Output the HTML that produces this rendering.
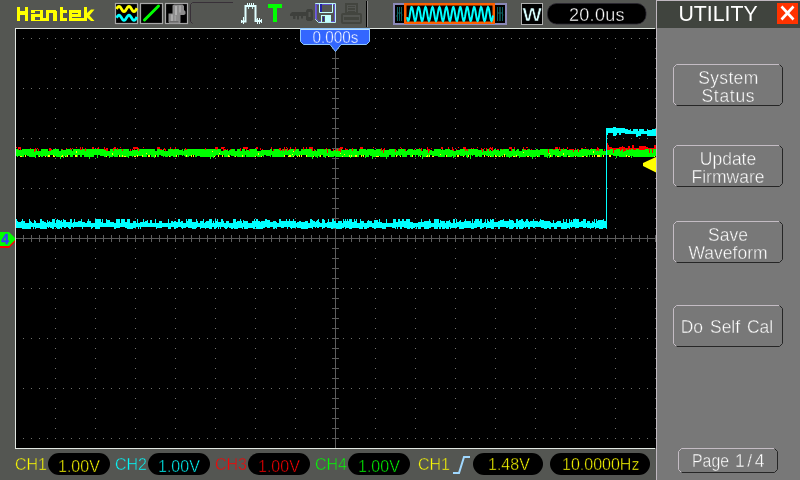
<!DOCTYPE html>
<html><head><meta charset="utf-8"><title>Hantek Utility</title>
<style>html,body{margin:0;padding:0;width:800px;height:480px;overflow:hidden;background:#545652}</style>
</head><body>
<svg width="800" height="480" viewBox="0 0 800 480" style="position:absolute;left:0;top:0;will-change:transform">
<rect x="0" y="0" width="800" height="480" fill="#545652"/>
<!-- plot -->
<rect x="15" y="28" width="640" height="421" fill="#e0e6e0"/>
<rect x="16" y="29" width="640" height="419" fill="#000"/>
<g shape-rendering="crispEdges">
<path d="M23 38h1v1h-1zM31 38h1v1h-1zM39 38h1v1h-1zM47 38h1v1h-1zM55 38h1v1h-1zM63 38h1v1h-1zM71 38h1v1h-1zM79 38h1v1h-1zM87 38h1v1h-1zM95 38h1v1h-1zM103 38h1v1h-1zM111 38h1v1h-1zM119 38h1v1h-1zM127 38h1v1h-1zM135 38h1v1h-1zM143 38h1v1h-1zM151 38h1v1h-1zM159 38h1v1h-1zM167 38h1v1h-1zM175 38h1v1h-1zM183 38h1v1h-1zM191 38h1v1h-1zM199 38h1v1h-1zM207 38h1v1h-1zM215 38h1v1h-1zM223 38h1v1h-1zM231 38h1v1h-1zM239 38h1v1h-1zM247 38h1v1h-1zM255 38h1v1h-1zM263 38h1v1h-1zM271 38h1v1h-1zM279 38h1v1h-1zM287 38h1v1h-1zM295 38h1v1h-1zM303 38h1v1h-1zM311 38h1v1h-1zM319 38h1v1h-1zM327 38h1v1h-1zM335 38h1v1h-1zM343 38h1v1h-1zM351 38h1v1h-1zM359 38h1v1h-1zM367 38h1v1h-1zM375 38h1v1h-1zM383 38h1v1h-1zM391 38h1v1h-1zM399 38h1v1h-1zM407 38h1v1h-1zM415 38h1v1h-1zM423 38h1v1h-1zM431 38h1v1h-1zM439 38h1v1h-1zM447 38h1v1h-1zM455 38h1v1h-1zM463 38h1v1h-1zM471 38h1v1h-1zM479 38h1v1h-1zM487 38h1v1h-1zM495 38h1v1h-1zM503 38h1v1h-1zM511 38h1v1h-1zM519 38h1v1h-1zM527 38h1v1h-1zM535 38h1v1h-1zM543 38h1v1h-1zM551 38h1v1h-1zM559 38h1v1h-1zM567 38h1v1h-1zM575 38h1v1h-1zM583 38h1v1h-1zM591 38h1v1h-1zM599 38h1v1h-1zM607 38h1v1h-1zM615 38h1v1h-1zM623 38h1v1h-1zM631 38h1v1h-1zM639 38h1v1h-1zM647 38h1v1h-1zM655 38h1v1h-1zM23 88h1v1h-1zM31 88h1v1h-1zM39 88h1v1h-1zM47 88h1v1h-1zM55 88h1v1h-1zM63 88h1v1h-1zM71 88h1v1h-1zM79 88h1v1h-1zM87 88h1v1h-1zM95 88h1v1h-1zM103 88h1v1h-1zM111 88h1v1h-1zM119 88h1v1h-1zM127 88h1v1h-1zM135 88h1v1h-1zM143 88h1v1h-1zM151 88h1v1h-1zM159 88h1v1h-1zM167 88h1v1h-1zM175 88h1v1h-1zM183 88h1v1h-1zM191 88h1v1h-1zM199 88h1v1h-1zM207 88h1v1h-1zM215 88h1v1h-1zM223 88h1v1h-1zM231 88h1v1h-1zM239 88h1v1h-1zM247 88h1v1h-1zM255 88h1v1h-1zM263 88h1v1h-1zM271 88h1v1h-1zM279 88h1v1h-1zM287 88h1v1h-1zM295 88h1v1h-1zM303 88h1v1h-1zM311 88h1v1h-1zM319 88h1v1h-1zM327 88h1v1h-1zM335 88h1v1h-1zM343 88h1v1h-1zM351 88h1v1h-1zM359 88h1v1h-1zM367 88h1v1h-1zM375 88h1v1h-1zM383 88h1v1h-1zM391 88h1v1h-1zM399 88h1v1h-1zM407 88h1v1h-1zM415 88h1v1h-1zM423 88h1v1h-1zM431 88h1v1h-1zM439 88h1v1h-1zM447 88h1v1h-1zM455 88h1v1h-1zM463 88h1v1h-1zM471 88h1v1h-1zM479 88h1v1h-1zM487 88h1v1h-1zM495 88h1v1h-1zM503 88h1v1h-1zM511 88h1v1h-1zM519 88h1v1h-1zM527 88h1v1h-1zM535 88h1v1h-1zM543 88h1v1h-1zM551 88h1v1h-1zM559 88h1v1h-1zM567 88h1v1h-1zM575 88h1v1h-1zM583 88h1v1h-1zM591 88h1v1h-1zM599 88h1v1h-1zM607 88h1v1h-1zM615 88h1v1h-1zM623 88h1v1h-1zM631 88h1v1h-1zM639 88h1v1h-1zM647 88h1v1h-1zM655 88h1v1h-1zM23 138h1v1h-1zM31 138h1v1h-1zM39 138h1v1h-1zM47 138h1v1h-1zM55 138h1v1h-1zM63 138h1v1h-1zM71 138h1v1h-1zM79 138h1v1h-1zM87 138h1v1h-1zM95 138h1v1h-1zM103 138h1v1h-1zM111 138h1v1h-1zM119 138h1v1h-1zM127 138h1v1h-1zM135 138h1v1h-1zM143 138h1v1h-1zM151 138h1v1h-1zM159 138h1v1h-1zM167 138h1v1h-1zM175 138h1v1h-1zM183 138h1v1h-1zM191 138h1v1h-1zM199 138h1v1h-1zM207 138h1v1h-1zM215 138h1v1h-1zM223 138h1v1h-1zM231 138h1v1h-1zM239 138h1v1h-1zM247 138h1v1h-1zM255 138h1v1h-1zM263 138h1v1h-1zM271 138h1v1h-1zM279 138h1v1h-1zM287 138h1v1h-1zM295 138h1v1h-1zM303 138h1v1h-1zM311 138h1v1h-1zM319 138h1v1h-1zM327 138h1v1h-1zM335 138h1v1h-1zM343 138h1v1h-1zM351 138h1v1h-1zM359 138h1v1h-1zM367 138h1v1h-1zM375 138h1v1h-1zM383 138h1v1h-1zM391 138h1v1h-1zM399 138h1v1h-1zM407 138h1v1h-1zM415 138h1v1h-1zM423 138h1v1h-1zM431 138h1v1h-1zM439 138h1v1h-1zM447 138h1v1h-1zM455 138h1v1h-1zM463 138h1v1h-1zM471 138h1v1h-1zM479 138h1v1h-1zM487 138h1v1h-1zM495 138h1v1h-1zM503 138h1v1h-1zM511 138h1v1h-1zM519 138h1v1h-1zM527 138h1v1h-1zM535 138h1v1h-1zM543 138h1v1h-1zM551 138h1v1h-1zM559 138h1v1h-1zM567 138h1v1h-1zM575 138h1v1h-1zM583 138h1v1h-1zM591 138h1v1h-1zM599 138h1v1h-1zM607 138h1v1h-1zM615 138h1v1h-1zM623 138h1v1h-1zM631 138h1v1h-1zM639 138h1v1h-1zM647 138h1v1h-1zM655 138h1v1h-1zM23 188h1v1h-1zM31 188h1v1h-1zM39 188h1v1h-1zM47 188h1v1h-1zM55 188h1v1h-1zM63 188h1v1h-1zM71 188h1v1h-1zM79 188h1v1h-1zM87 188h1v1h-1zM95 188h1v1h-1zM103 188h1v1h-1zM111 188h1v1h-1zM119 188h1v1h-1zM127 188h1v1h-1zM135 188h1v1h-1zM143 188h1v1h-1zM151 188h1v1h-1zM159 188h1v1h-1zM167 188h1v1h-1zM175 188h1v1h-1zM183 188h1v1h-1zM191 188h1v1h-1zM199 188h1v1h-1zM207 188h1v1h-1zM215 188h1v1h-1zM223 188h1v1h-1zM231 188h1v1h-1zM239 188h1v1h-1zM247 188h1v1h-1zM255 188h1v1h-1zM263 188h1v1h-1zM271 188h1v1h-1zM279 188h1v1h-1zM287 188h1v1h-1zM295 188h1v1h-1zM303 188h1v1h-1zM311 188h1v1h-1zM319 188h1v1h-1zM327 188h1v1h-1zM335 188h1v1h-1zM343 188h1v1h-1zM351 188h1v1h-1zM359 188h1v1h-1zM367 188h1v1h-1zM375 188h1v1h-1zM383 188h1v1h-1zM391 188h1v1h-1zM399 188h1v1h-1zM407 188h1v1h-1zM415 188h1v1h-1zM423 188h1v1h-1zM431 188h1v1h-1zM439 188h1v1h-1zM447 188h1v1h-1zM455 188h1v1h-1zM463 188h1v1h-1zM471 188h1v1h-1zM479 188h1v1h-1zM487 188h1v1h-1zM495 188h1v1h-1zM503 188h1v1h-1zM511 188h1v1h-1zM519 188h1v1h-1zM527 188h1v1h-1zM535 188h1v1h-1zM543 188h1v1h-1zM551 188h1v1h-1zM559 188h1v1h-1zM567 188h1v1h-1zM575 188h1v1h-1zM583 188h1v1h-1zM591 188h1v1h-1zM599 188h1v1h-1zM607 188h1v1h-1zM615 188h1v1h-1zM623 188h1v1h-1zM631 188h1v1h-1zM639 188h1v1h-1zM647 188h1v1h-1zM655 188h1v1h-1zM23 288h1v1h-1zM31 288h1v1h-1zM39 288h1v1h-1zM47 288h1v1h-1zM55 288h1v1h-1zM63 288h1v1h-1zM71 288h1v1h-1zM79 288h1v1h-1zM87 288h1v1h-1zM95 288h1v1h-1zM103 288h1v1h-1zM111 288h1v1h-1zM119 288h1v1h-1zM127 288h1v1h-1zM135 288h1v1h-1zM143 288h1v1h-1zM151 288h1v1h-1zM159 288h1v1h-1zM167 288h1v1h-1zM175 288h1v1h-1zM183 288h1v1h-1zM191 288h1v1h-1zM199 288h1v1h-1zM207 288h1v1h-1zM215 288h1v1h-1zM223 288h1v1h-1zM231 288h1v1h-1zM239 288h1v1h-1zM247 288h1v1h-1zM255 288h1v1h-1zM263 288h1v1h-1zM271 288h1v1h-1zM279 288h1v1h-1zM287 288h1v1h-1zM295 288h1v1h-1zM303 288h1v1h-1zM311 288h1v1h-1zM319 288h1v1h-1zM327 288h1v1h-1zM335 288h1v1h-1zM343 288h1v1h-1zM351 288h1v1h-1zM359 288h1v1h-1zM367 288h1v1h-1zM375 288h1v1h-1zM383 288h1v1h-1zM391 288h1v1h-1zM399 288h1v1h-1zM407 288h1v1h-1zM415 288h1v1h-1zM423 288h1v1h-1zM431 288h1v1h-1zM439 288h1v1h-1zM447 288h1v1h-1zM455 288h1v1h-1zM463 288h1v1h-1zM471 288h1v1h-1zM479 288h1v1h-1zM487 288h1v1h-1zM495 288h1v1h-1zM503 288h1v1h-1zM511 288h1v1h-1zM519 288h1v1h-1zM527 288h1v1h-1zM535 288h1v1h-1zM543 288h1v1h-1zM551 288h1v1h-1zM559 288h1v1h-1zM567 288h1v1h-1zM575 288h1v1h-1zM583 288h1v1h-1zM591 288h1v1h-1zM599 288h1v1h-1zM607 288h1v1h-1zM615 288h1v1h-1zM623 288h1v1h-1zM631 288h1v1h-1zM639 288h1v1h-1zM647 288h1v1h-1zM655 288h1v1h-1zM23 338h1v1h-1zM31 338h1v1h-1zM39 338h1v1h-1zM47 338h1v1h-1zM55 338h1v1h-1zM63 338h1v1h-1zM71 338h1v1h-1zM79 338h1v1h-1zM87 338h1v1h-1zM95 338h1v1h-1zM103 338h1v1h-1zM111 338h1v1h-1zM119 338h1v1h-1zM127 338h1v1h-1zM135 338h1v1h-1zM143 338h1v1h-1zM151 338h1v1h-1zM159 338h1v1h-1zM167 338h1v1h-1zM175 338h1v1h-1zM183 338h1v1h-1zM191 338h1v1h-1zM199 338h1v1h-1zM207 338h1v1h-1zM215 338h1v1h-1zM223 338h1v1h-1zM231 338h1v1h-1zM239 338h1v1h-1zM247 338h1v1h-1zM255 338h1v1h-1zM263 338h1v1h-1zM271 338h1v1h-1zM279 338h1v1h-1zM287 338h1v1h-1zM295 338h1v1h-1zM303 338h1v1h-1zM311 338h1v1h-1zM319 338h1v1h-1zM327 338h1v1h-1zM335 338h1v1h-1zM343 338h1v1h-1zM351 338h1v1h-1zM359 338h1v1h-1zM367 338h1v1h-1zM375 338h1v1h-1zM383 338h1v1h-1zM391 338h1v1h-1zM399 338h1v1h-1zM407 338h1v1h-1zM415 338h1v1h-1zM423 338h1v1h-1zM431 338h1v1h-1zM439 338h1v1h-1zM447 338h1v1h-1zM455 338h1v1h-1zM463 338h1v1h-1zM471 338h1v1h-1zM479 338h1v1h-1zM487 338h1v1h-1zM495 338h1v1h-1zM503 338h1v1h-1zM511 338h1v1h-1zM519 338h1v1h-1zM527 338h1v1h-1zM535 338h1v1h-1zM543 338h1v1h-1zM551 338h1v1h-1zM559 338h1v1h-1zM567 338h1v1h-1zM575 338h1v1h-1zM583 338h1v1h-1zM591 338h1v1h-1zM599 338h1v1h-1zM607 338h1v1h-1zM615 338h1v1h-1zM623 338h1v1h-1zM631 338h1v1h-1zM639 338h1v1h-1zM647 338h1v1h-1zM655 338h1v1h-1zM23 388h1v1h-1zM31 388h1v1h-1zM39 388h1v1h-1zM47 388h1v1h-1zM55 388h1v1h-1zM63 388h1v1h-1zM71 388h1v1h-1zM79 388h1v1h-1zM87 388h1v1h-1zM95 388h1v1h-1zM103 388h1v1h-1zM111 388h1v1h-1zM119 388h1v1h-1zM127 388h1v1h-1zM135 388h1v1h-1zM143 388h1v1h-1zM151 388h1v1h-1zM159 388h1v1h-1zM167 388h1v1h-1zM175 388h1v1h-1zM183 388h1v1h-1zM191 388h1v1h-1zM199 388h1v1h-1zM207 388h1v1h-1zM215 388h1v1h-1zM223 388h1v1h-1zM231 388h1v1h-1zM239 388h1v1h-1zM247 388h1v1h-1zM255 388h1v1h-1zM263 388h1v1h-1zM271 388h1v1h-1zM279 388h1v1h-1zM287 388h1v1h-1zM295 388h1v1h-1zM303 388h1v1h-1zM311 388h1v1h-1zM319 388h1v1h-1zM327 388h1v1h-1zM335 388h1v1h-1zM343 388h1v1h-1zM351 388h1v1h-1zM359 388h1v1h-1zM367 388h1v1h-1zM375 388h1v1h-1zM383 388h1v1h-1zM391 388h1v1h-1zM399 388h1v1h-1zM407 388h1v1h-1zM415 388h1v1h-1zM423 388h1v1h-1zM431 388h1v1h-1zM439 388h1v1h-1zM447 388h1v1h-1zM455 388h1v1h-1zM463 388h1v1h-1zM471 388h1v1h-1zM479 388h1v1h-1zM487 388h1v1h-1zM495 388h1v1h-1zM503 388h1v1h-1zM511 388h1v1h-1zM519 388h1v1h-1zM527 388h1v1h-1zM535 388h1v1h-1zM543 388h1v1h-1zM551 388h1v1h-1zM559 388h1v1h-1zM567 388h1v1h-1zM575 388h1v1h-1zM583 388h1v1h-1zM591 388h1v1h-1zM599 388h1v1h-1zM607 388h1v1h-1zM615 388h1v1h-1zM623 388h1v1h-1zM631 388h1v1h-1zM639 388h1v1h-1zM647 388h1v1h-1zM655 388h1v1h-1zM23 438h1v1h-1zM31 438h1v1h-1zM39 438h1v1h-1zM47 438h1v1h-1zM55 438h1v1h-1zM63 438h1v1h-1zM71 438h1v1h-1zM79 438h1v1h-1zM87 438h1v1h-1zM95 438h1v1h-1zM103 438h1v1h-1zM111 438h1v1h-1zM119 438h1v1h-1zM127 438h1v1h-1zM135 438h1v1h-1zM143 438h1v1h-1zM151 438h1v1h-1zM159 438h1v1h-1zM167 438h1v1h-1zM175 438h1v1h-1zM183 438h1v1h-1zM191 438h1v1h-1zM199 438h1v1h-1zM207 438h1v1h-1zM215 438h1v1h-1zM223 438h1v1h-1zM231 438h1v1h-1zM239 438h1v1h-1zM247 438h1v1h-1zM255 438h1v1h-1zM263 438h1v1h-1zM271 438h1v1h-1zM279 438h1v1h-1zM287 438h1v1h-1zM295 438h1v1h-1zM303 438h1v1h-1zM311 438h1v1h-1zM319 438h1v1h-1zM327 438h1v1h-1zM335 438h1v1h-1zM343 438h1v1h-1zM351 438h1v1h-1zM359 438h1v1h-1zM367 438h1v1h-1zM375 438h1v1h-1zM383 438h1v1h-1zM391 438h1v1h-1zM399 438h1v1h-1zM407 438h1v1h-1zM415 438h1v1h-1zM423 438h1v1h-1zM431 438h1v1h-1zM439 438h1v1h-1zM447 438h1v1h-1zM455 438h1v1h-1zM463 438h1v1h-1zM471 438h1v1h-1zM479 438h1v1h-1zM487 438h1v1h-1zM495 438h1v1h-1zM503 438h1v1h-1zM511 438h1v1h-1zM519 438h1v1h-1zM527 438h1v1h-1zM535 438h1v1h-1zM543 438h1v1h-1zM551 438h1v1h-1zM559 438h1v1h-1zM567 438h1v1h-1zM575 438h1v1h-1zM583 438h1v1h-1zM591 438h1v1h-1zM599 438h1v1h-1zM607 438h1v1h-1zM615 438h1v1h-1zM623 438h1v1h-1zM631 438h1v1h-1zM639 438h1v1h-1zM647 438h1v1h-1zM655 438h1v1h-1zM55 48h1v1h-1zM55 58h1v1h-1zM55 68h1v1h-1zM55 78h1v1h-1zM55 98h1v1h-1zM55 108h1v1h-1zM55 118h1v1h-1zM55 128h1v1h-1zM55 148h1v1h-1zM55 158h1v1h-1zM55 168h1v1h-1zM55 178h1v1h-1zM55 198h1v1h-1zM55 208h1v1h-1zM55 218h1v1h-1zM55 228h1v1h-1zM55 248h1v1h-1zM55 258h1v1h-1zM55 268h1v1h-1zM55 278h1v1h-1zM55 298h1v1h-1zM55 308h1v1h-1zM55 318h1v1h-1zM55 328h1v1h-1zM55 348h1v1h-1zM55 358h1v1h-1zM55 368h1v1h-1zM55 378h1v1h-1zM55 398h1v1h-1zM55 408h1v1h-1zM55 418h1v1h-1zM55 428h1v1h-1zM95 48h1v1h-1zM95 58h1v1h-1zM95 68h1v1h-1zM95 78h1v1h-1zM95 98h1v1h-1zM95 108h1v1h-1zM95 118h1v1h-1zM95 128h1v1h-1zM95 148h1v1h-1zM95 158h1v1h-1zM95 168h1v1h-1zM95 178h1v1h-1zM95 198h1v1h-1zM95 208h1v1h-1zM95 218h1v1h-1zM95 228h1v1h-1zM95 248h1v1h-1zM95 258h1v1h-1zM95 268h1v1h-1zM95 278h1v1h-1zM95 298h1v1h-1zM95 308h1v1h-1zM95 318h1v1h-1zM95 328h1v1h-1zM95 348h1v1h-1zM95 358h1v1h-1zM95 368h1v1h-1zM95 378h1v1h-1zM95 398h1v1h-1zM95 408h1v1h-1zM95 418h1v1h-1zM95 428h1v1h-1zM135 48h1v1h-1zM135 58h1v1h-1zM135 68h1v1h-1zM135 78h1v1h-1zM135 98h1v1h-1zM135 108h1v1h-1zM135 118h1v1h-1zM135 128h1v1h-1zM135 148h1v1h-1zM135 158h1v1h-1zM135 168h1v1h-1zM135 178h1v1h-1zM135 198h1v1h-1zM135 208h1v1h-1zM135 218h1v1h-1zM135 228h1v1h-1zM135 248h1v1h-1zM135 258h1v1h-1zM135 268h1v1h-1zM135 278h1v1h-1zM135 298h1v1h-1zM135 308h1v1h-1zM135 318h1v1h-1zM135 328h1v1h-1zM135 348h1v1h-1zM135 358h1v1h-1zM135 368h1v1h-1zM135 378h1v1h-1zM135 398h1v1h-1zM135 408h1v1h-1zM135 418h1v1h-1zM135 428h1v1h-1zM175 48h1v1h-1zM175 58h1v1h-1zM175 68h1v1h-1zM175 78h1v1h-1zM175 98h1v1h-1zM175 108h1v1h-1zM175 118h1v1h-1zM175 128h1v1h-1zM175 148h1v1h-1zM175 158h1v1h-1zM175 168h1v1h-1zM175 178h1v1h-1zM175 198h1v1h-1zM175 208h1v1h-1zM175 218h1v1h-1zM175 228h1v1h-1zM175 248h1v1h-1zM175 258h1v1h-1zM175 268h1v1h-1zM175 278h1v1h-1zM175 298h1v1h-1zM175 308h1v1h-1zM175 318h1v1h-1zM175 328h1v1h-1zM175 348h1v1h-1zM175 358h1v1h-1zM175 368h1v1h-1zM175 378h1v1h-1zM175 398h1v1h-1zM175 408h1v1h-1zM175 418h1v1h-1zM175 428h1v1h-1zM215 48h1v1h-1zM215 58h1v1h-1zM215 68h1v1h-1zM215 78h1v1h-1zM215 98h1v1h-1zM215 108h1v1h-1zM215 118h1v1h-1zM215 128h1v1h-1zM215 148h1v1h-1zM215 158h1v1h-1zM215 168h1v1h-1zM215 178h1v1h-1zM215 198h1v1h-1zM215 208h1v1h-1zM215 218h1v1h-1zM215 228h1v1h-1zM215 248h1v1h-1zM215 258h1v1h-1zM215 268h1v1h-1zM215 278h1v1h-1zM215 298h1v1h-1zM215 308h1v1h-1zM215 318h1v1h-1zM215 328h1v1h-1zM215 348h1v1h-1zM215 358h1v1h-1zM215 368h1v1h-1zM215 378h1v1h-1zM215 398h1v1h-1zM215 408h1v1h-1zM215 418h1v1h-1zM215 428h1v1h-1zM255 48h1v1h-1zM255 58h1v1h-1zM255 68h1v1h-1zM255 78h1v1h-1zM255 98h1v1h-1zM255 108h1v1h-1zM255 118h1v1h-1zM255 128h1v1h-1zM255 148h1v1h-1zM255 158h1v1h-1zM255 168h1v1h-1zM255 178h1v1h-1zM255 198h1v1h-1zM255 208h1v1h-1zM255 218h1v1h-1zM255 228h1v1h-1zM255 248h1v1h-1zM255 258h1v1h-1zM255 268h1v1h-1zM255 278h1v1h-1zM255 298h1v1h-1zM255 308h1v1h-1zM255 318h1v1h-1zM255 328h1v1h-1zM255 348h1v1h-1zM255 358h1v1h-1zM255 368h1v1h-1zM255 378h1v1h-1zM255 398h1v1h-1zM255 408h1v1h-1zM255 418h1v1h-1zM255 428h1v1h-1zM295 48h1v1h-1zM295 58h1v1h-1zM295 68h1v1h-1zM295 78h1v1h-1zM295 98h1v1h-1zM295 108h1v1h-1zM295 118h1v1h-1zM295 128h1v1h-1zM295 148h1v1h-1zM295 158h1v1h-1zM295 168h1v1h-1zM295 178h1v1h-1zM295 198h1v1h-1zM295 208h1v1h-1zM295 218h1v1h-1zM295 228h1v1h-1zM295 248h1v1h-1zM295 258h1v1h-1zM295 268h1v1h-1zM295 278h1v1h-1zM295 298h1v1h-1zM295 308h1v1h-1zM295 318h1v1h-1zM295 328h1v1h-1zM295 348h1v1h-1zM295 358h1v1h-1zM295 368h1v1h-1zM295 378h1v1h-1zM295 398h1v1h-1zM295 408h1v1h-1zM295 418h1v1h-1zM295 428h1v1h-1zM375 48h1v1h-1zM375 58h1v1h-1zM375 68h1v1h-1zM375 78h1v1h-1zM375 98h1v1h-1zM375 108h1v1h-1zM375 118h1v1h-1zM375 128h1v1h-1zM375 148h1v1h-1zM375 158h1v1h-1zM375 168h1v1h-1zM375 178h1v1h-1zM375 198h1v1h-1zM375 208h1v1h-1zM375 218h1v1h-1zM375 228h1v1h-1zM375 248h1v1h-1zM375 258h1v1h-1zM375 268h1v1h-1zM375 278h1v1h-1zM375 298h1v1h-1zM375 308h1v1h-1zM375 318h1v1h-1zM375 328h1v1h-1zM375 348h1v1h-1zM375 358h1v1h-1zM375 368h1v1h-1zM375 378h1v1h-1zM375 398h1v1h-1zM375 408h1v1h-1zM375 418h1v1h-1zM375 428h1v1h-1zM415 48h1v1h-1zM415 58h1v1h-1zM415 68h1v1h-1zM415 78h1v1h-1zM415 98h1v1h-1zM415 108h1v1h-1zM415 118h1v1h-1zM415 128h1v1h-1zM415 148h1v1h-1zM415 158h1v1h-1zM415 168h1v1h-1zM415 178h1v1h-1zM415 198h1v1h-1zM415 208h1v1h-1zM415 218h1v1h-1zM415 228h1v1h-1zM415 248h1v1h-1zM415 258h1v1h-1zM415 268h1v1h-1zM415 278h1v1h-1zM415 298h1v1h-1zM415 308h1v1h-1zM415 318h1v1h-1zM415 328h1v1h-1zM415 348h1v1h-1zM415 358h1v1h-1zM415 368h1v1h-1zM415 378h1v1h-1zM415 398h1v1h-1zM415 408h1v1h-1zM415 418h1v1h-1zM415 428h1v1h-1zM455 48h1v1h-1zM455 58h1v1h-1zM455 68h1v1h-1zM455 78h1v1h-1zM455 98h1v1h-1zM455 108h1v1h-1zM455 118h1v1h-1zM455 128h1v1h-1zM455 148h1v1h-1zM455 158h1v1h-1zM455 168h1v1h-1zM455 178h1v1h-1zM455 198h1v1h-1zM455 208h1v1h-1zM455 218h1v1h-1zM455 228h1v1h-1zM455 248h1v1h-1zM455 258h1v1h-1zM455 268h1v1h-1zM455 278h1v1h-1zM455 298h1v1h-1zM455 308h1v1h-1zM455 318h1v1h-1zM455 328h1v1h-1zM455 348h1v1h-1zM455 358h1v1h-1zM455 368h1v1h-1zM455 378h1v1h-1zM455 398h1v1h-1zM455 408h1v1h-1zM455 418h1v1h-1zM455 428h1v1h-1zM495 48h1v1h-1zM495 58h1v1h-1zM495 68h1v1h-1zM495 78h1v1h-1zM495 98h1v1h-1zM495 108h1v1h-1zM495 118h1v1h-1zM495 128h1v1h-1zM495 148h1v1h-1zM495 158h1v1h-1zM495 168h1v1h-1zM495 178h1v1h-1zM495 198h1v1h-1zM495 208h1v1h-1zM495 218h1v1h-1zM495 228h1v1h-1zM495 248h1v1h-1zM495 258h1v1h-1zM495 268h1v1h-1zM495 278h1v1h-1zM495 298h1v1h-1zM495 308h1v1h-1zM495 318h1v1h-1zM495 328h1v1h-1zM495 348h1v1h-1zM495 358h1v1h-1zM495 368h1v1h-1zM495 378h1v1h-1zM495 398h1v1h-1zM495 408h1v1h-1zM495 418h1v1h-1zM495 428h1v1h-1zM535 48h1v1h-1zM535 58h1v1h-1zM535 68h1v1h-1zM535 78h1v1h-1zM535 98h1v1h-1zM535 108h1v1h-1zM535 118h1v1h-1zM535 128h1v1h-1zM535 148h1v1h-1zM535 158h1v1h-1zM535 168h1v1h-1zM535 178h1v1h-1zM535 198h1v1h-1zM535 208h1v1h-1zM535 218h1v1h-1zM535 228h1v1h-1zM535 248h1v1h-1zM535 258h1v1h-1zM535 268h1v1h-1zM535 278h1v1h-1zM535 298h1v1h-1zM535 308h1v1h-1zM535 318h1v1h-1zM535 328h1v1h-1zM535 348h1v1h-1zM535 358h1v1h-1zM535 368h1v1h-1zM535 378h1v1h-1zM535 398h1v1h-1zM535 408h1v1h-1zM535 418h1v1h-1zM535 428h1v1h-1zM575 48h1v1h-1zM575 58h1v1h-1zM575 68h1v1h-1zM575 78h1v1h-1zM575 98h1v1h-1zM575 108h1v1h-1zM575 118h1v1h-1zM575 128h1v1h-1zM575 148h1v1h-1zM575 158h1v1h-1zM575 168h1v1h-1zM575 178h1v1h-1zM575 198h1v1h-1zM575 208h1v1h-1zM575 218h1v1h-1zM575 228h1v1h-1zM575 248h1v1h-1zM575 258h1v1h-1zM575 268h1v1h-1zM575 278h1v1h-1zM575 298h1v1h-1zM575 308h1v1h-1zM575 318h1v1h-1zM575 328h1v1h-1zM575 348h1v1h-1zM575 358h1v1h-1zM575 368h1v1h-1zM575 378h1v1h-1zM575 398h1v1h-1zM575 408h1v1h-1zM575 418h1v1h-1zM575 428h1v1h-1zM615 48h1v1h-1zM615 58h1v1h-1zM615 68h1v1h-1zM615 78h1v1h-1zM615 98h1v1h-1zM615 108h1v1h-1zM615 118h1v1h-1zM615 128h1v1h-1zM615 148h1v1h-1zM615 158h1v1h-1zM615 168h1v1h-1zM615 178h1v1h-1zM615 198h1v1h-1zM615 208h1v1h-1zM615 218h1v1h-1zM615 228h1v1h-1zM615 248h1v1h-1zM615 258h1v1h-1zM615 268h1v1h-1zM615 278h1v1h-1zM615 298h1v1h-1zM615 308h1v1h-1zM615 318h1v1h-1zM615 328h1v1h-1zM615 348h1v1h-1zM615 358h1v1h-1zM615 368h1v1h-1zM615 378h1v1h-1zM615 398h1v1h-1zM615 408h1v1h-1zM615 418h1v1h-1zM615 428h1v1h-1zM655 48h1v1h-1zM655 58h1v1h-1zM655 68h1v1h-1zM655 78h1v1h-1zM655 98h1v1h-1zM655 108h1v1h-1zM655 118h1v1h-1zM655 128h1v1h-1zM655 148h1v1h-1zM655 158h1v1h-1zM655 168h1v1h-1zM655 178h1v1h-1zM655 198h1v1h-1zM655 208h1v1h-1zM655 218h1v1h-1zM655 228h1v1h-1zM655 248h1v1h-1zM655 258h1v1h-1zM655 268h1v1h-1zM655 278h1v1h-1zM655 298h1v1h-1zM655 308h1v1h-1zM655 318h1v1h-1zM655 328h1v1h-1zM655 348h1v1h-1zM655 358h1v1h-1zM655 368h1v1h-1zM655 378h1v1h-1zM655 398h1v1h-1zM655 408h1v1h-1zM655 418h1v1h-1zM655 428h1v1h-1z" fill="#6e706c"/>
<path d="M16 238h640v1h-640zM335 29h1v419h-1zM23 235h1v7h-1zM31 235h1v7h-1zM39 235h1v7h-1zM47 235h1v7h-1zM55 235h1v7h-1zM63 235h1v7h-1zM71 235h1v7h-1zM79 235h1v7h-1zM87 235h1v7h-1zM95 235h1v7h-1zM103 235h1v7h-1zM111 235h1v7h-1zM119 235h1v7h-1zM127 235h1v7h-1zM135 235h1v7h-1zM143 235h1v7h-1zM151 235h1v7h-1zM159 235h1v7h-1zM167 235h1v7h-1zM175 235h1v7h-1zM183 235h1v7h-1zM191 235h1v7h-1zM199 235h1v7h-1zM207 235h1v7h-1zM215 235h1v7h-1zM223 235h1v7h-1zM231 235h1v7h-1zM239 235h1v7h-1zM247 235h1v7h-1zM255 235h1v7h-1zM263 235h1v7h-1zM271 235h1v7h-1zM279 235h1v7h-1zM287 235h1v7h-1zM295 235h1v7h-1zM303 235h1v7h-1zM311 235h1v7h-1zM319 235h1v7h-1zM327 235h1v7h-1zM335 235h1v7h-1zM343 235h1v7h-1zM351 235h1v7h-1zM359 235h1v7h-1zM367 235h1v7h-1zM375 235h1v7h-1zM383 235h1v7h-1zM391 235h1v7h-1zM399 235h1v7h-1zM407 235h1v7h-1zM415 235h1v7h-1zM423 235h1v7h-1zM431 235h1v7h-1zM439 235h1v7h-1zM447 235h1v7h-1zM455 235h1v7h-1zM463 235h1v7h-1zM471 235h1v7h-1zM479 235h1v7h-1zM487 235h1v7h-1zM495 235h1v7h-1zM503 235h1v7h-1zM511 235h1v7h-1zM519 235h1v7h-1zM527 235h1v7h-1zM535 235h1v7h-1zM543 235h1v7h-1zM551 235h1v7h-1zM559 235h1v7h-1zM567 235h1v7h-1zM575 235h1v7h-1zM583 235h1v7h-1zM591 235h1v7h-1zM599 235h1v7h-1zM607 235h1v7h-1zM615 235h1v7h-1zM623 235h1v7h-1zM631 235h1v7h-1zM639 235h1v7h-1zM647 235h1v7h-1zM655 235h1v7h-1zM332 38h7v1h-7zM332 48h7v1h-7zM332 58h7v1h-7zM332 68h7v1h-7zM332 78h7v1h-7zM332 88h7v1h-7zM332 98h7v1h-7zM332 108h7v1h-7zM332 118h7v1h-7zM332 128h7v1h-7zM332 138h7v1h-7zM332 148h7v1h-7zM332 158h7v1h-7zM332 168h7v1h-7zM332 178h7v1h-7zM332 188h7v1h-7zM332 198h7v1h-7zM332 208h7v1h-7zM332 218h7v1h-7zM332 228h7v1h-7zM332 238h7v1h-7zM332 248h7v1h-7zM332 258h7v1h-7zM332 268h7v1h-7zM332 278h7v1h-7zM332 288h7v1h-7zM332 298h7v1h-7zM332 308h7v1h-7zM332 318h7v1h-7zM332 328h7v1h-7zM332 338h7v1h-7zM332 348h7v1h-7zM332 358h7v1h-7zM332 368h7v1h-7zM332 378h7v1h-7zM332 388h7v1h-7zM332 398h7v1h-7zM332 408h7v1h-7zM332 418h7v1h-7zM332 428h7v1h-7zM332 438h7v1h-7z" fill="#5c5c5c"/>
<path d="" fill="#ffff00"/><path d="M606 143h1v8h-1zM607 143h1v8h-1zM608 145h1v6h-1zM609 147h1v4h-1zM610 147h1v4h-1zM611 147h1v4h-1zM612 148h1v3h-1zM613 148h1v3h-1zM614 148h1v3h-1zM615 148h1v3h-1zM616 148h1v3h-1zM617 148h1v3h-1zM618 148h1v3h-1zM619 147h1v4h-1zM620 147h1v4h-1zM621 147h1v4h-1zM622 146h1v5h-1zM623 147h1v4h-1zM624 147h1v4h-1zM625 148h1v3h-1zM626 148h1v3h-1zM627 148h1v3h-1zM628 146h1v5h-1zM629 146h1v5h-1zM630 148h1v3h-1zM631 148h1v3h-1zM632 145h1v6h-1zM633 145h1v6h-1zM634 148h1v3h-1zM635 148h1v3h-1zM636 148h1v3h-1zM637 148h1v3h-1zM638 148h1v3h-1zM639 146h1v5h-1zM640 146h1v5h-1zM641 146h1v5h-1zM642 146h1v5h-1zM643 146h1v5h-1zM644 146h1v5h-1zM645 146h1v5h-1zM646 147h1v4h-1zM647 147h1v4h-1zM648 148h1v3h-1zM649 148h1v3h-1zM650 148h1v3h-1zM651 148h1v3h-1zM652 148h1v3h-1zM653 148h1v3h-1zM654 145h1v6h-1zM655 145h1v6h-1z" fill="#ff0000"/><path d="M16 149h1v7h-1zM17 149h1v8h-1zM18 150h1v6h-1zM19 150h1v6h-1zM20 150h1v6h-1zM21 150h1v6h-1zM22 149h1v8h-1zM23 149h1v8h-1zM24 149h1v6h-1zM25 149h1v6h-1zM26 149h1v6h-1zM27 149h1v7h-1zM28 149h1v7h-1zM29 149h1v8h-1zM30 149h1v8h-1zM31 149h1v8h-1zM32 149h1v8h-1zM33 149h1v8h-1zM34 149h1v8h-1zM35 149h1v9h-1zM36 149h1v6h-1zM37 151h1v4h-1zM38 151h1v6h-1zM39 151h1v5h-1zM40 151h1v5h-1zM41 149h1v8h-1zM42 149h1v8h-1zM43 149h1v7h-1zM44 149h1v7h-1zM45 149h1v7h-1zM46 149h1v7h-1zM47 149h1v8h-1zM48 151h1v4h-1zM49 151h1v4h-1zM50 151h1v4h-1zM51 150h1v5h-1zM52 150h1v5h-1zM53 149h1v6h-1zM54 149h1v7h-1zM55 149h1v7h-1zM56 149h1v8h-1zM57 149h1v8h-1zM58 149h1v8h-1zM59 151h1v6h-1zM60 151h1v8h-1zM61 149h1v7h-1zM62 150h1v5h-1zM63 150h1v8h-1zM64 150h1v6h-1zM65 150h1v6h-1zM66 149h1v8h-1zM67 149h1v6h-1zM68 149h1v6h-1zM69 149h1v6h-1zM70 149h1v8h-1zM71 149h1v8h-1zM72 151h1v6h-1zM73 149h1v6h-1zM74 149h1v6h-1zM75 149h1v6h-1zM76 149h1v6h-1zM77 149h1v8h-1zM78 149h1v6h-1zM79 149h1v6h-1zM80 150h1v7h-1zM81 150h1v7h-1zM82 149h1v6h-1zM83 149h1v6h-1zM84 149h1v8h-1zM85 149h1v8h-1zM86 149h1v8h-1zM87 149h1v8h-1zM88 149h1v8h-1zM89 149h1v10h-1zM90 149h1v8h-1zM91 149h1v8h-1zM92 149h1v8h-1zM93 149h1v8h-1zM94 149h1v6h-1zM95 149h1v6h-1zM96 149h1v6h-1zM97 149h1v9h-1zM98 149h1v6h-1zM99 149h1v6h-1zM100 149h1v7h-1zM101 149h1v7h-1zM102 149h1v7h-1zM103 149h1v7h-1zM104 150h1v7h-1zM105 150h1v7h-1zM106 151h1v5h-1zM107 151h1v5h-1zM108 151h1v5h-1zM109 151h1v7h-1zM110 149h1v8h-1zM111 149h1v8h-1zM112 149h1v8h-1zM113 151h1v5h-1zM114 149h1v8h-1zM115 149h1v8h-1zM116 149h1v8h-1zM117 149h1v8h-1zM118 149h1v6h-1zM119 149h1v6h-1zM120 149h1v8h-1zM121 149h1v8h-1zM122 151h1v4h-1zM123 149h1v8h-1zM124 149h1v7h-1zM125 149h1v7h-1zM126 149h1v8h-1zM127 149h1v8h-1zM128 149h1v9h-1zM129 151h1v5h-1zM130 151h1v5h-1zM131 151h1v5h-1zM132 150h1v7h-1zM133 150h1v6h-1zM134 150h1v6h-1zM135 150h1v6h-1zM136 150h1v6h-1zM137 149h1v6h-1zM138 149h1v7h-1zM139 149h1v7h-1zM140 149h1v7h-1zM141 149h1v7h-1zM142 149h1v6h-1zM143 149h1v8h-1zM144 149h1v8h-1zM145 149h1v8h-1zM146 149h1v8h-1zM147 149h1v6h-1zM148 149h1v6h-1zM149 149h1v6h-1zM150 149h1v6h-1zM151 149h1v8h-1zM152 149h1v8h-1zM153 149h1v8h-1zM154 149h1v9h-1zM155 151h1v4h-1zM156 151h1v4h-1zM157 149h1v8h-1zM158 149h1v8h-1zM159 149h1v6h-1zM160 149h1v6h-1zM161 150h1v6h-1zM162 150h1v6h-1zM163 149h1v8h-1zM164 151h1v5h-1zM165 151h1v6h-1zM166 151h1v6h-1zM167 151h1v6h-1zM168 149h1v7h-1zM169 149h1v7h-1zM170 149h1v8h-1zM171 149h1v7h-1zM172 149h1v7h-1zM173 149h1v8h-1zM174 149h1v8h-1zM175 149h1v8h-1zM176 149h1v6h-1zM177 149h1v6h-1zM178 149h1v8h-1zM179 150h1v5h-1zM180 150h1v5h-1zM181 150h1v5h-1zM182 149h1v7h-1zM183 151h1v4h-1zM184 149h1v7h-1zM185 149h1v8h-1zM186 150h1v5h-1zM187 149h1v8h-1zM188 149h1v8h-1zM189 149h1v7h-1zM190 149h1v7h-1zM191 149h1v6h-1zM192 149h1v6h-1zM193 149h1v6h-1zM194 149h1v6h-1zM195 149h1v8h-1zM196 149h1v8h-1zM197 149h1v7h-1zM198 149h1v7h-1zM199 149h1v7h-1zM200 149h1v8h-1zM201 149h1v8h-1zM202 149h1v8h-1zM203 149h1v8h-1zM204 149h1v8h-1zM205 149h1v8h-1zM206 149h1v8h-1zM207 149h1v8h-1zM208 149h1v8h-1zM209 149h1v8h-1zM210 149h1v10h-1zM211 149h1v8h-1zM212 149h1v8h-1zM213 149h1v9h-1zM214 149h1v7h-1zM215 149h1v7h-1zM216 150h1v5h-1zM217 149h1v6h-1zM218 149h1v6h-1zM219 149h1v6h-1zM220 149h1v6h-1zM221 151h1v4h-1zM222 151h1v4h-1zM223 151h1v4h-1zM224 150h1v7h-1zM225 150h1v7h-1zM226 150h1v7h-1zM227 150h1v7h-1zM228 151h1v4h-1zM229 150h1v6h-1zM230 150h1v5h-1zM231 149h1v7h-1zM232 149h1v7h-1zM233 149h1v7h-1zM234 149h1v8h-1zM235 151h1v5h-1zM236 151h1v5h-1zM237 149h1v8h-1zM238 149h1v8h-1zM239 149h1v8h-1zM240 151h1v6h-1zM241 151h1v6h-1zM242 149h1v6h-1zM243 149h1v8h-1zM244 149h1v8h-1zM245 151h1v4h-1zM246 150h1v7h-1zM247 150h1v7h-1zM248 150h1v7h-1zM249 150h1v7h-1zM250 149h1v8h-1zM251 149h1v8h-1zM252 149h1v8h-1zM253 149h1v8h-1zM254 149h1v8h-1zM255 149h1v7h-1zM256 149h1v7h-1zM257 151h1v6h-1zM258 151h1v6h-1zM259 151h1v6h-1zM260 151h1v6h-1zM261 150h1v6h-1zM262 150h1v6h-1zM263 150h1v7h-1zM264 150h1v5h-1zM265 150h1v5h-1zM266 150h1v6h-1zM267 150h1v6h-1zM268 150h1v6h-1zM269 150h1v6h-1zM270 149h1v8h-1zM271 149h1v6h-1zM272 151h1v6h-1zM273 151h1v6h-1zM274 149h1v8h-1zM275 149h1v8h-1zM276 149h1v8h-1zM277 149h1v8h-1zM278 149h1v8h-1zM279 150h1v7h-1zM280 150h1v7h-1zM281 150h1v7h-1zM282 150h1v7h-1zM283 149h1v8h-1zM284 151h1v4h-1zM285 149h1v6h-1zM286 149h1v6h-1zM287 149h1v6h-1zM288 150h1v6h-1zM289 150h1v5h-1zM290 149h1v6h-1zM291 149h1v8h-1zM292 149h1v8h-1zM293 149h1v7h-1zM294 149h1v7h-1zM295 149h1v6h-1zM296 149h1v7h-1zM297 149h1v7h-1zM298 149h1v7h-1zM299 151h1v4h-1zM300 151h1v4h-1zM301 149h1v6h-1zM302 149h1v6h-1zM303 149h1v6h-1zM304 149h1v6h-1zM305 149h1v6h-1zM306 149h1v6h-1zM307 149h1v8h-1zM308 149h1v8h-1zM309 149h1v8h-1zM310 149h1v8h-1zM311 149h1v8h-1zM312 151h1v8h-1zM313 151h1v5h-1zM314 151h1v5h-1zM315 150h1v7h-1zM316 151h1v6h-1zM317 149h1v9h-1zM318 149h1v7h-1zM319 149h1v8h-1zM320 149h1v6h-1zM321 149h1v6h-1zM322 149h1v6h-1zM323 149h1v8h-1zM324 150h1v7h-1zM325 149h1v9h-1zM326 149h1v7h-1zM327 149h1v7h-1zM328 149h1v7h-1zM329 149h1v8h-1zM330 150h1v7h-1zM331 151h1v6h-1zM332 151h1v6h-1zM333 151h1v6h-1zM334 150h1v6h-1zM335 150h1v7h-1zM336 151h1v6h-1zM337 149h1v8h-1zM338 149h1v8h-1zM339 149h1v8h-1zM340 149h1v8h-1zM341 149h1v8h-1zM342 150h1v6h-1zM343 150h1v7h-1zM344 150h1v7h-1zM345 150h1v7h-1zM346 150h1v7h-1zM347 150h1v7h-1zM348 150h1v7h-1zM349 149h1v6h-1zM350 149h1v9h-1zM351 149h1v6h-1zM352 149h1v8h-1zM353 149h1v8h-1zM354 149h1v8h-1zM355 149h1v6h-1zM356 149h1v6h-1zM357 151h1v6h-1zM358 151h1v6h-1zM359 149h1v6h-1zM360 149h1v6h-1zM361 149h1v6h-1zM362 149h1v7h-1zM363 149h1v6h-1zM364 149h1v6h-1zM365 149h1v9h-1zM366 150h1v7h-1zM367 149h1v8h-1zM368 149h1v8h-1zM369 149h1v6h-1zM370 149h1v7h-1zM371 149h1v7h-1zM372 149h1v10h-1zM373 149h1v8h-1zM374 150h1v7h-1zM375 150h1v7h-1zM376 149h1v7h-1zM377 149h1v7h-1zM378 149h1v7h-1zM379 149h1v7h-1zM380 149h1v8h-1zM381 149h1v8h-1zM382 150h1v7h-1zM383 150h1v7h-1zM384 149h1v8h-1zM385 150h1v7h-1zM386 150h1v9h-1zM387 150h1v7h-1zM388 150h1v7h-1zM389 149h1v6h-1zM390 149h1v6h-1zM391 149h1v8h-1zM392 149h1v8h-1zM393 149h1v8h-1zM394 149h1v8h-1zM395 150h1v5h-1zM396 150h1v5h-1zM397 151h1v5h-1zM398 149h1v6h-1zM399 149h1v7h-1zM400 149h1v7h-1zM401 149h1v6h-1zM402 149h1v8h-1zM403 149h1v8h-1zM404 149h1v8h-1zM405 151h1v6h-1zM406 151h1v6h-1zM407 150h1v5h-1zM408 149h1v6h-1zM409 149h1v6h-1zM410 149h1v8h-1zM411 149h1v8h-1zM412 149h1v6h-1zM413 150h1v5h-1zM414 150h1v5h-1zM415 150h1v7h-1zM416 149h1v6h-1zM417 149h1v6h-1zM418 149h1v8h-1zM419 149h1v7h-1zM420 149h1v7h-1zM421 151h1v4h-1zM422 151h1v8h-1zM423 149h1v8h-1zM424 149h1v8h-1zM425 149h1v8h-1zM426 150h1v6h-1zM427 150h1v5h-1zM428 150h1v7h-1zM429 150h1v5h-1zM430 150h1v5h-1zM431 150h1v5h-1zM432 151h1v5h-1zM433 151h1v5h-1zM434 149h1v7h-1zM435 149h1v7h-1zM436 149h1v7h-1zM437 149h1v7h-1zM438 149h1v8h-1zM439 149h1v8h-1zM440 149h1v8h-1zM441 150h1v7h-1zM442 149h1v8h-1zM443 150h1v7h-1zM444 150h1v7h-1zM445 149h1v6h-1zM446 149h1v6h-1zM447 149h1v8h-1zM448 149h1v8h-1zM449 149h1v8h-1zM450 150h1v7h-1zM451 150h1v7h-1zM452 149h1v7h-1zM453 151h1v7h-1zM454 151h1v6h-1zM455 151h1v6h-1zM456 150h1v5h-1zM457 150h1v5h-1zM458 150h1v5h-1zM459 150h1v5h-1zM460 149h1v7h-1zM461 149h1v7h-1zM462 149h1v7h-1zM463 149h1v7h-1zM464 149h1v7h-1zM465 151h1v4h-1zM466 150h1v7h-1zM467 150h1v8h-1zM468 149h1v6h-1zM469 149h1v6h-1zM470 149h1v10h-1zM471 149h1v6h-1zM472 149h1v7h-1zM473 149h1v6h-1zM474 149h1v6h-1zM475 149h1v8h-1zM476 149h1v8h-1zM477 149h1v8h-1zM478 150h1v6h-1zM479 150h1v7h-1zM480 150h1v7h-1zM481 150h1v7h-1zM482 149h1v6h-1zM483 149h1v6h-1zM484 151h1v4h-1zM485 151h1v4h-1zM486 149h1v7h-1zM487 149h1v7h-1zM488 149h1v7h-1zM489 150h1v6h-1zM490 150h1v6h-1zM491 151h1v6h-1zM492 151h1v6h-1zM493 150h1v7h-1zM494 149h1v6h-1zM495 149h1v6h-1zM496 150h1v6h-1zM497 150h1v6h-1zM498 150h1v7h-1zM499 151h1v5h-1zM500 149h1v8h-1zM501 149h1v7h-1zM502 149h1v7h-1zM503 149h1v6h-1zM504 149h1v6h-1zM505 149h1v6h-1zM506 149h1v8h-1zM507 149h1v8h-1zM508 149h1v8h-1zM509 151h1v7h-1zM510 151h1v6h-1zM511 151h1v6h-1zM512 149h1v7h-1zM513 149h1v7h-1zM514 149h1v7h-1zM515 151h1v6h-1zM516 150h1v5h-1zM517 149h1v7h-1zM518 149h1v7h-1zM519 151h1v7h-1zM520 151h1v6h-1zM521 151h1v6h-1zM522 149h1v8h-1zM523 149h1v8h-1zM524 150h1v7h-1zM525 150h1v7h-1zM526 150h1v6h-1zM527 150h1v6h-1zM528 149h1v7h-1zM529 149h1v7h-1zM530 150h1v7h-1zM531 150h1v7h-1zM532 150h1v9h-1zM533 150h1v7h-1zM534 150h1v7h-1zM535 150h1v7h-1zM536 149h1v7h-1zM537 149h1v7h-1zM538 150h1v7h-1zM539 150h1v7h-1zM540 149h1v6h-1zM541 149h1v6h-1zM542 149h1v6h-1zM543 149h1v6h-1zM544 149h1v8h-1zM545 149h1v8h-1zM546 149h1v8h-1zM547 149h1v9h-1zM548 149h1v7h-1zM549 149h1v9h-1zM550 149h1v6h-1zM551 149h1v8h-1zM552 149h1v8h-1zM553 150h1v5h-1zM554 150h1v5h-1zM555 149h1v8h-1zM556 149h1v7h-1zM557 149h1v7h-1zM558 149h1v7h-1zM559 151h1v6h-1zM560 151h1v6h-1zM561 149h1v7h-1zM562 149h1v7h-1zM563 149h1v8h-1zM564 149h1v8h-1zM565 149h1v8h-1zM566 149h1v8h-1zM567 150h1v5h-1zM568 150h1v6h-1zM569 150h1v6h-1zM570 150h1v7h-1zM571 150h1v7h-1zM572 150h1v7h-1zM573 150h1v7h-1zM574 150h1v6h-1zM575 150h1v6h-1zM576 150h1v6h-1zM577 149h1v8h-1zM578 150h1v7h-1zM579 150h1v7h-1zM580 150h1v7h-1zM581 149h1v8h-1zM582 149h1v7h-1zM583 149h1v7h-1zM584 149h1v7h-1zM585 149h1v7h-1zM586 149h1v7h-1zM587 150h1v7h-1zM588 149h1v6h-1zM589 150h1v7h-1zM590 149h1v6h-1zM591 149h1v6h-1zM592 149h1v7h-1zM593 149h1v6h-1zM594 149h1v6h-1zM595 149h1v6h-1zM596 149h1v6h-1zM597 149h1v6h-1zM598 149h1v6h-1zM599 149h1v6h-1zM600 149h1v8h-1zM601 149h1v8h-1zM602 149h1v6h-1zM603 151h1v4h-1zM604 151h1v4h-1zM605 151h1v4h-1zM606 150h1v5h-1zM607 150h1v5h-1zM608 150h1v5h-1zM609 150h1v5h-1zM610 149h1v6h-1zM611 149h1v6h-1zM612 149h1v6h-1zM613 150h1v6h-1zM614 150h1v6h-1zM615 150h1v6h-1zM616 149h1v9h-1zM617 149h1v7h-1zM618 149h1v7h-1zM619 149h1v8h-1zM620 151h1v6h-1zM621 150h1v7h-1zM622 149h1v8h-1zM623 151h1v6h-1zM624 151h1v6h-1zM625 151h1v6h-1zM626 149h1v6h-1zM627 150h1v6h-1zM628 150h1v6h-1zM629 149h1v7h-1zM630 150h1v6h-1zM631 149h1v9h-1zM632 149h1v7h-1zM633 150h1v7h-1zM634 150h1v7h-1zM635 150h1v7h-1zM636 149h1v8h-1zM637 149h1v8h-1zM638 149h1v8h-1zM639 150h1v7h-1zM640 150h1v7h-1zM641 150h1v7h-1zM642 150h1v7h-1zM643 150h1v7h-1zM644 150h1v7h-1zM645 149h1v8h-1zM646 149h1v8h-1zM647 149h1v8h-1zM648 149h1v8h-1zM649 149h1v8h-1zM650 149h1v8h-1zM651 149h1v8h-1zM652 149h1v8h-1zM653 149h1v8h-1zM654 149h1v7h-1zM655 149h1v7h-1z" fill="#00ff00"/><path d="M16 147h1v1h-1zM18 149h1v1h-1zM20 149h1v1h-1zM20 147h1v3h-1zM30 148h1v1h-1zM35 148h1v3h-1zM37 148h1v1h-1zM38 149h1v2h-1zM49 149h1v2h-1zM49 148h1v1h-1zM50 148h1v3h-1zM51 149h1v1h-1zM62 149h1v1h-1zM66 148h1v1h-1zM70 148h1v2h-1zM72 148h1v1h-1zM76 147h1v1h-1zM80 149h1v1h-1zM80 147h1v3h-1zM81 149h1v1h-1zM85 148h1v3h-1zM97 148h1v1h-1zM98 147h1v2h-1zM104 147h1v3h-1zM105 149h1v1h-1zM106 149h1v2h-1zM106 148h1v2h-1zM107 149h1v2h-1zM107 148h1v2h-1zM113 149h1v2h-1zM113 148h1v3h-1zM117 148h1v2h-1zM120 147h1v1h-1zM122 149h1v2h-1zM130 149h1v2h-1zM132 149h1v1h-1zM134 149h1v1h-1zM138 148h1v3h-1zM143 147h1v1h-1zM157 147h1v2h-1zM158 147h1v2h-1zM159 147h1v2h-1zM161 149h1v1h-1zM164 148h1v1h-1zM165 149h1v2h-1zM170 147h1v2h-1zM175 147h1v2h-1zM185 148h1v2h-1zM186 149h1v1h-1zM205 148h1v2h-1zM216 149h1v1h-1zM216 147h1v3h-1zM221 147h1v2h-1zM223 149h1v2h-1zM223 147h1v2h-1zM224 149h1v1h-1zM224 147h1v1h-1zM225 149h1v1h-1zM227 149h1v1h-1zM230 149h1v1h-1zM240 148h1v3h-1zM246 149h1v1h-1zM256 147h1v1h-1zM260 148h1v2h-1zM262 149h1v1h-1zM273 149h1v2h-1zM279 149h1v1h-1zM279 148h1v1h-1zM280 148h1v3h-1zM284 149h1v2h-1zM286 147h1v1h-1zM287 148h1v3h-1zM289 149h1v1h-1zM290 147h1v2h-1zM295 147h1v3h-1zM303 147h1v3h-1zM312 149h1v2h-1zM314 149h1v2h-1zM324 149h1v1h-1zM326 148h1v1h-1zM330 149h1v1h-1zM333 149h1v2h-1zM336 149h1v2h-1zM339 148h1v3h-1zM345 148h1v2h-1zM346 149h1v1h-1zM347 149h1v1h-1zM352 148h1v3h-1zM373 147h1v1h-1zM381 148h1v3h-1zM384 148h1v2h-1zM395 149h1v1h-1zM400 147h1v1h-1zM401 148h1v1h-1zM405 149h1v2h-1zM414 149h1v1h-1zM419 148h1v1h-1zM421 149h1v2h-1zM421 148h1v2h-1zM427 147h1v3h-1zM428 149h1v1h-1zM431 148h1v1h-1zM448 147h1v2h-1zM452 147h1v3h-1zM453 149h1v2h-1zM456 149h1v1h-1zM458 147h1v1h-1zM463 148h1v1h-1zM465 149h1v2h-1zM466 149h1v1h-1zM467 149h1v1h-1zM471 148h1v1h-1zM473 148h1v1h-1zM477 147h1v1h-1zM481 148h1v2h-1zM484 148h1v1h-1zM486 148h1v3h-1zM489 149h1v1h-1zM489 148h1v3h-1zM490 147h1v2h-1zM491 148h1v2h-1zM492 149h1v2h-1zM492 147h1v3h-1zM497 149h1v1h-1zM498 149h1v1h-1zM511 148h1v3h-1zM524 149h1v1h-1zM525 149h1v1h-1zM526 147h1v1h-1zM527 149h1v1h-1zM527 147h1v1h-1zM531 149h1v1h-1zM553 149h1v1h-1zM554 149h1v1h-1zM559 147h1v3h-1zM560 149h1v2h-1zM563 148h1v2h-1zM569 149h1v1h-1zM570 149h1v1h-1zM571 149h1v1h-1zM572 149h1v1h-1zM573 149h1v1h-1zM575 149h1v1h-1zM578 149h1v1h-1zM581 148h1v1h-1zM582 148h1v1h-1zM585 147h1v1h-1zM587 149h1v1h-1zM591 148h1v1h-1zM597 147h1v3h-1zM598 148h1v3h-1zM604 149h1v2h-1zM18 147h1v2h-1zM19 147h1v2h-1zM20 147h1v2h-1zM82 147h1v2h-1zM92 147h1v2h-1zM93 147h1v2h-1zM114 147h1v2h-1zM115 147h1v2h-1zM133 147h1v2h-1zM134 147h1v2h-1zM135 147h1v2h-1zM136 147h1v2h-1zM137 147h1v2h-1zM215 147h1v2h-1zM217 147h1v2h-1zM221 147h1v2h-1zM222 147h1v2h-1zM243 147h1v2h-1zM244 147h1v2h-1zM245 147h1v2h-1zM246 147h1v2h-1zM247 147h1v2h-1zM256 147h1v2h-1zM257 147h1v2h-1zM271 147h1v2h-1zM284 147h1v2h-1zM306 147h1v2h-1zM309 147h1v2h-1zM310 147h1v2h-1zM311 147h1v2h-1zM312 147h1v2h-1zM340 147h1v2h-1zM341 147h1v2h-1zM342 147h1v2h-1zM360 147h1v2h-1zM361 147h1v2h-1zM362 147h1v2h-1zM441 147h1v2h-1zM442 147h1v2h-1zM463 147h1v2h-1zM464 147h1v2h-1zM465 147h1v2h-1zM492 147h1v2h-1zM509 147h1v2h-1zM510 147h1v2h-1zM511 147h1v2h-1zM514 147h1v2h-1zM523 147h1v2h-1zM555 147h1v2h-1zM556 147h1v2h-1zM557 147h1v2h-1zM567 147h1v2h-1zM597 147h1v2h-1zM34 149h1v3h-1zM160 149h1v1h-1zM164 149h1v1h-1zM173 149h1v1h-1zM225 149h1v1h-1zM249 149h1v2h-1zM282 149h1v2h-1zM285 149h1v1h-1zM294 149h1v2h-1zM327 149h1v4h-1zM338 149h1v2h-1zM340 149h1v3h-1zM383 149h1v4h-1zM395 149h1v3h-1zM428 149h1v4h-1zM429 149h1v2h-1zM467 149h1v2h-1zM482 149h1v3h-1zM502 149h1v1h-1zM548 149h1v4h-1zM573 149h1v3h-1zM578 149h1v3h-1zM596 149h1v2h-1zM613 149h1v4h-1zM621 149h1v1h-1zM623 149h1v3h-1zM649 149h1v4h-1zM652 149h1v4h-1z" fill="#ff0000"/><path d="M20 156h1v1h-1zM21 156h1v1h-1zM25 155h1v2h-1zM39 156h1v1h-1zM45 156h1v1h-1zM48 155h1v2h-1zM49 155h1v2h-1zM53 155h1v2h-1zM54 156h1v1h-1zM61 156h1v1h-1zM62 155h1v2h-1zM65 156h1v1h-1zM67 155h1v2h-1zM75 155h1v2h-1zM76 155h1v2h-1zM76 151h1v2h-1zM106 156h1v1h-1zM112 153h1v2h-1zM119 155h1v2h-1zM122 155h1v2h-1zM124 156h1v1h-1zM125 156h1v1h-1zM134 156h1v1h-1zM135 156h1v1h-1zM137 155h1v2h-1zM142 155h1v2h-1zM146 153h1v1h-1zM148 155h1v2h-1zM149 155h1v2h-1zM155 155h1v2h-1zM169 156h1v1h-1zM176 155h1v2h-1zM186 155h1v2h-1zM191 155h1v2h-1zM193 155h1v2h-1zM212 151h1v1h-1zM214 156h1v1h-1zM218 155h1v2h-1zM219 153h1v1h-1zM222 155h1v2h-1zM228 155h1v2h-1zM229 156h1v1h-1zM235 156h1v1h-1zM242 155h1v2h-1zM255 156h1v1h-1zM258 153h1v2h-1zM261 156h1v1h-1zM284 155h1v2h-1zM288 156h1v1h-1zM289 155h1v2h-1zM290 155h1v2h-1zM292 154h1v1h-1zM293 156h1v1h-1zM293 151h1v1h-1zM297 156h1v1h-1zM299 155h1v2h-1zM301 155h1v2h-1zM306 155h1v2h-1zM313 156h1v1h-1zM320 155h1v2h-1zM328 156h1v1h-1zM340 153h1v1h-1zM342 156h1v1h-1zM344 154h1v1h-1zM349 155h1v2h-1zM351 155h1v2h-1zM355 155h1v2h-1zM356 155h1v2h-1zM361 155h1v2h-1zM363 155h1v2h-1zM376 156h1v1h-1zM377 156h1v1h-1zM378 156h1v1h-1zM396 155h1v2h-1zM400 156h1v1h-1zM412 155h1v2h-1zM420 156h1v1h-1zM426 156h1v1h-1zM427 155h1v2h-1zM429 155h1v2h-1zM432 156h1v1h-1zM433 156h1v1h-1zM440 154h1v1h-1zM446 155h1v2h-1zM457 155h1v2h-1zM458 155h1v2h-1zM463 156h1v1h-1zM468 155h1v2h-1zM484 155h1v2h-1zM488 156h1v1h-1zM490 156h1v1h-1zM495 155h1v2h-1zM496 156h1v1h-1zM499 156h1v1h-1zM502 156h1v1h-1zM504 155h1v2h-1zM504 154h1v1h-1zM513 156h1v1h-1zM514 156h1v1h-1zM516 155h1v2h-1zM523 152h1v1h-1zM527 156h1v1h-1zM528 156h1v1h-1zM537 156h1v1h-1zM549 153h1v1h-1zM550 155h1v2h-1zM557 156h1v1h-1zM558 156h1v1h-1zM563 153h1v2h-1zM568 156h1v1h-1zM569 156h1v1h-1zM575 156h1v1h-1zM582 156h1v1h-1zM583 156h1v1h-1zM586 156h1v1h-1zM592 156h1v1h-1zM593 151h1v2h-1zM594 155h1v2h-1zM597 155h1v2h-1zM598 155h1v2h-1zM599 155h1v2h-1zM603 155h1v2h-1zM609 155h1v2h-1zM610 155h1v2h-1zM626 155h1v2h-1zM628 156h1v1h-1zM629 156h1v1h-1zM654 156h1v1h-1z" fill="#ffff00"/><path d="M16 219h1v9h-1zM17 221h1v7h-1zM18 222h1v6h-1zM19 222h1v6h-1zM20 222h1v6h-1zM21 221h1v7h-1zM22 219h1v10h-1zM23 221h1v8h-1zM24 221h1v8h-1zM25 223h1v6h-1zM26 223h1v6h-1zM27 223h1v6h-1zM28 223h1v6h-1zM29 219h1v10h-1zM30 221h1v8h-1zM31 222h1v5h-1zM32 223h1v4h-1zM33 223h1v6h-1zM34 220h1v7h-1zM35 221h1v8h-1zM36 223h1v5h-1zM37 223h1v5h-1zM38 223h1v5h-1zM39 223h1v5h-1zM40 219h1v10h-1zM41 219h1v10h-1zM42 221h1v8h-1zM43 221h1v8h-1zM44 222h1v7h-1zM45 222h1v7h-1zM46 223h1v6h-1zM47 220h1v7h-1zM48 222h1v6h-1zM49 221h1v6h-1zM50 222h1v6h-1zM51 222h1v6h-1zM52 219h1v10h-1zM53 219h1v10h-1zM54 219h1v8h-1zM55 223h1v4h-1zM56 220h1v8h-1zM57 219h1v10h-1zM58 220h1v9h-1zM59 220h1v9h-1zM60 221h1v7h-1zM61 220h1v9h-1zM62 222h1v5h-1zM63 219h1v8h-1zM64 220h1v8h-1zM65 220h1v8h-1zM66 222h1v5h-1zM67 222h1v5h-1zM68 222h1v6h-1zM69 222h1v7h-1zM70 219h1v10h-1zM71 219h1v8h-1zM72 223h1v4h-1zM73 222h1v6h-1zM74 219h1v8h-1zM75 222h1v5h-1zM76 222h1v5h-1zM77 222h1v5h-1zM78 221h1v6h-1zM79 221h1v6h-1zM80 221h1v6h-1zM81 219h1v8h-1zM82 222h1v7h-1zM83 222h1v5h-1zM84 222h1v5h-1zM85 223h1v4h-1zM86 223h1v4h-1zM87 221h1v6h-1zM88 219h1v8h-1zM89 221h1v6h-1zM90 221h1v6h-1zM91 223h1v6h-1zM92 223h1v5h-1zM93 223h1v4h-1zM94 223h1v4h-1zM95 219h1v10h-1zM96 219h1v10h-1zM97 219h1v10h-1zM98 219h1v10h-1zM99 219h1v10h-1zM100 219h1v8h-1zM101 222h1v5h-1zM102 219h1v8h-1zM103 223h1v4h-1zM104 223h1v4h-1zM105 223h1v4h-1zM106 219h1v8h-1zM107 220h1v7h-1zM108 220h1v7h-1zM109 220h1v7h-1zM110 222h1v5h-1zM111 222h1v5h-1zM112 222h1v5h-1zM113 222h1v5h-1zM114 223h1v6h-1zM115 223h1v6h-1zM116 219h1v9h-1zM117 219h1v9h-1zM118 219h1v9h-1zM119 219h1v9h-1zM120 223h1v4h-1zM121 219h1v8h-1zM122 219h1v8h-1zM123 219h1v8h-1zM124 219h1v8h-1zM125 222h1v6h-1zM126 222h1v6h-1zM127 219h1v10h-1zM128 219h1v10h-1zM129 219h1v10h-1zM130 223h1v6h-1zM131 223h1v6h-1zM132 223h1v6h-1zM133 221h1v7h-1zM134 221h1v7h-1zM135 221h1v7h-1zM136 223h1v4h-1zM137 219h1v8h-1zM138 223h1v6h-1zM139 223h1v4h-1zM140 222h1v7h-1zM141 222h1v5h-1zM142 222h1v5h-1zM143 219h1v8h-1zM144 222h1v5h-1zM145 221h1v6h-1zM146 221h1v6h-1zM147 220h1v7h-1zM148 223h1v4h-1zM149 223h1v4h-1zM150 220h1v7h-1zM151 220h1v7h-1zM152 223h1v4h-1zM153 223h1v4h-1zM154 223h1v4h-1zM155 219h1v8h-1zM156 223h1v6h-1zM157 223h1v5h-1zM158 223h1v5h-1zM159 221h1v7h-1zM160 221h1v7h-1zM161 221h1v7h-1zM162 223h1v4h-1zM163 223h1v4h-1zM164 223h1v4h-1zM165 223h1v4h-1zM166 223h1v4h-1zM167 223h1v4h-1zM168 219h1v10h-1zM169 223h1v6h-1zM170 223h1v6h-1zM171 221h1v6h-1zM172 221h1v6h-1zM173 222h1v5h-1zM174 221h1v8h-1zM175 221h1v8h-1zM176 222h1v6h-1zM177 222h1v6h-1zM178 219h1v8h-1zM179 219h1v8h-1zM180 222h1v5h-1zM181 221h1v7h-1zM182 221h1v8h-1zM183 223h1v5h-1zM184 223h1v5h-1zM185 223h1v5h-1zM186 219h1v8h-1zM187 221h1v6h-1zM188 219h1v9h-1zM189 219h1v9h-1zM190 219h1v9h-1zM191 219h1v9h-1zM192 222h1v7h-1zM193 222h1v7h-1zM194 222h1v7h-1zM195 222h1v7h-1zM196 219h1v9h-1zM197 221h1v6h-1zM198 223h1v4h-1zM199 223h1v4h-1zM200 221h1v8h-1zM201 221h1v7h-1zM202 221h1v7h-1zM203 219h1v9h-1zM204 223h1v5h-1zM205 222h1v7h-1zM206 221h1v7h-1zM207 221h1v7h-1zM208 221h1v7h-1zM209 219h1v10h-1zM210 219h1v10h-1zM211 219h1v10h-1zM212 223h1v4h-1zM213 221h1v6h-1zM214 223h1v6h-1zM215 219h1v10h-1zM216 221h1v7h-1zM217 219h1v8h-1zM218 222h1v7h-1zM219 222h1v5h-1zM220 222h1v7h-1zM221 219h1v8h-1zM222 219h1v8h-1zM223 221h1v6h-1zM224 223h1v5h-1zM225 223h1v6h-1zM226 221h1v8h-1zM227 221h1v7h-1zM228 221h1v6h-1zM229 223h1v5h-1zM230 223h1v5h-1zM231 223h1v6h-1zM232 223h1v6h-1zM233 219h1v9h-1zM234 219h1v10h-1zM235 219h1v10h-1zM236 222h1v7h-1zM237 221h1v8h-1zM238 221h1v7h-1zM239 221h1v7h-1zM240 219h1v9h-1zM241 221h1v7h-1zM242 223h1v6h-1zM243 220h1v7h-1zM244 221h1v8h-1zM245 221h1v8h-1zM246 221h1v8h-1zM247 221h1v8h-1zM248 223h1v5h-1zM249 223h1v5h-1zM250 223h1v5h-1zM251 223h1v5h-1zM252 221h1v7h-1zM253 221h1v8h-1zM254 219h1v10h-1zM255 221h1v6h-1zM256 219h1v10h-1zM257 219h1v10h-1zM258 221h1v8h-1zM259 221h1v8h-1zM260 222h1v7h-1zM261 221h1v8h-1zM262 221h1v8h-1zM263 221h1v7h-1zM264 221h1v7h-1zM265 219h1v8h-1zM266 219h1v8h-1zM267 220h1v8h-1zM268 220h1v8h-1zM269 220h1v8h-1zM270 222h1v5h-1zM271 222h1v5h-1zM272 222h1v5h-1zM273 221h1v8h-1zM274 221h1v8h-1zM275 221h1v7h-1zM276 222h1v7h-1zM277 223h1v4h-1zM278 223h1v4h-1zM279 219h1v8h-1zM280 219h1v8h-1zM281 221h1v7h-1zM282 221h1v7h-1zM283 221h1v7h-1zM284 221h1v6h-1zM285 221h1v6h-1zM286 219h1v8h-1zM287 221h1v8h-1zM288 221h1v6h-1zM289 219h1v8h-1zM290 221h1v7h-1zM291 221h1v8h-1zM292 221h1v7h-1zM293 219h1v9h-1zM294 221h1v7h-1zM295 221h1v7h-1zM296 223h1v4h-1zM297 222h1v6h-1zM298 222h1v6h-1zM299 221h1v7h-1zM300 221h1v7h-1zM301 222h1v7h-1zM302 222h1v7h-1zM303 222h1v7h-1zM304 222h1v7h-1zM305 221h1v8h-1zM306 221h1v8h-1zM307 221h1v8h-1zM308 223h1v5h-1zM309 223h1v5h-1zM310 219h1v9h-1zM311 219h1v9h-1zM312 220h1v9h-1zM313 221h1v6h-1zM314 221h1v6h-1zM315 222h1v6h-1zM316 221h1v6h-1zM317 220h1v8h-1zM318 219h1v9h-1zM319 222h1v5h-1zM320 223h1v4h-1zM321 223h1v4h-1zM322 219h1v10h-1zM323 219h1v9h-1zM324 220h1v8h-1zM325 223h1v4h-1zM326 223h1v4h-1zM327 222h1v6h-1zM328 219h1v9h-1zM329 222h1v6h-1zM330 222h1v6h-1zM331 222h1v7h-1zM332 219h1v10h-1zM333 219h1v9h-1zM334 221h1v7h-1zM335 221h1v7h-1zM336 223h1v6h-1zM337 223h1v6h-1zM338 221h1v8h-1zM339 221h1v8h-1zM340 221h1v8h-1zM341 221h1v8h-1zM342 223h1v5h-1zM343 219h1v9h-1zM344 221h1v6h-1zM345 219h1v10h-1zM346 221h1v7h-1zM347 219h1v9h-1zM348 221h1v7h-1zM349 219h1v10h-1zM350 219h1v10h-1zM351 219h1v10h-1zM352 222h1v6h-1zM353 222h1v6h-1zM354 219h1v9h-1zM355 221h1v7h-1zM356 219h1v9h-1zM357 223h1v5h-1zM358 223h1v5h-1zM359 223h1v6h-1zM360 219h1v10h-1zM361 221h1v8h-1zM362 221h1v8h-1zM363 221h1v6h-1zM364 223h1v6h-1zM365 223h1v6h-1zM366 223h1v6h-1zM367 221h1v7h-1zM368 220h1v8h-1zM369 221h1v6h-1zM370 221h1v6h-1zM371 221h1v6h-1zM372 223h1v5h-1zM373 223h1v5h-1zM374 220h1v9h-1zM375 220h1v9h-1zM376 220h1v8h-1zM377 220h1v8h-1zM378 222h1v6h-1zM379 219h1v9h-1zM380 222h1v6h-1zM381 222h1v6h-1zM382 223h1v6h-1zM383 223h1v6h-1zM384 223h1v6h-1zM385 223h1v6h-1zM386 219h1v8h-1zM387 223h1v4h-1zM388 223h1v4h-1zM389 223h1v4h-1zM390 223h1v4h-1zM391 223h1v4h-1zM392 223h1v5h-1zM393 219h1v9h-1zM394 219h1v9h-1zM395 219h1v10h-1zM396 222h1v5h-1zM397 222h1v7h-1zM398 219h1v8h-1zM399 219h1v8h-1zM400 221h1v8h-1zM401 221h1v8h-1zM402 219h1v8h-1zM403 219h1v8h-1zM404 221h1v7h-1zM405 221h1v7h-1zM406 219h1v9h-1zM407 219h1v10h-1zM408 219h1v10h-1zM409 219h1v10h-1zM410 222h1v6h-1zM411 222h1v7h-1zM412 222h1v7h-1zM413 223h1v5h-1zM414 223h1v5h-1zM415 223h1v4h-1zM416 223h1v6h-1zM417 223h1v4h-1zM418 222h1v7h-1zM419 222h1v7h-1zM420 222h1v7h-1zM421 219h1v8h-1zM422 222h1v5h-1zM423 222h1v5h-1zM424 221h1v8h-1zM425 221h1v8h-1zM426 221h1v8h-1zM427 221h1v8h-1zM428 221h1v8h-1zM429 219h1v9h-1zM430 221h1v7h-1zM431 223h1v4h-1zM432 223h1v4h-1zM433 223h1v4h-1zM434 219h1v10h-1zM435 219h1v10h-1zM436 219h1v10h-1zM437 219h1v10h-1zM438 219h1v8h-1zM439 223h1v6h-1zM440 220h1v9h-1zM441 221h1v6h-1zM442 221h1v8h-1zM443 221h1v8h-1zM444 221h1v8h-1zM445 223h1v5h-1zM446 221h1v8h-1zM447 221h1v8h-1zM448 221h1v8h-1zM449 220h1v7h-1zM450 222h1v7h-1zM451 223h1v5h-1zM452 223h1v5h-1zM453 219h1v9h-1zM454 219h1v9h-1zM455 223h1v5h-1zM456 219h1v9h-1zM457 222h1v5h-1zM458 222h1v5h-1zM459 221h1v8h-1zM460 220h1v9h-1zM461 222h1v7h-1zM462 222h1v7h-1zM463 222h1v7h-1zM464 221h1v7h-1zM465 219h1v9h-1zM466 221h1v7h-1zM467 221h1v7h-1zM468 221h1v7h-1zM469 221h1v7h-1zM470 221h1v7h-1zM471 223h1v6h-1zM472 219h1v10h-1zM473 223h1v6h-1zM474 221h1v7h-1zM475 219h1v9h-1zM476 219h1v9h-1zM477 219h1v8h-1zM478 219h1v8h-1zM479 221h1v6h-1zM480 219h1v10h-1zM481 219h1v10h-1zM482 223h1v5h-1zM483 223h1v5h-1zM484 222h1v5h-1zM485 219h1v8h-1zM486 223h1v6h-1zM487 219h1v9h-1zM488 221h1v7h-1zM489 222h1v6h-1zM490 219h1v9h-1zM491 220h1v9h-1zM492 219h1v10h-1zM493 219h1v10h-1zM494 222h1v5h-1zM495 222h1v5h-1zM496 222h1v5h-1zM497 222h1v5h-1zM498 221h1v8h-1zM499 221h1v8h-1zM500 220h1v7h-1zM501 220h1v7h-1zM502 220h1v7h-1zM503 219h1v8h-1zM504 221h1v6h-1zM505 221h1v6h-1zM506 221h1v7h-1zM507 221h1v7h-1zM508 221h1v6h-1zM509 219h1v10h-1zM510 220h1v9h-1zM511 220h1v9h-1zM512 220h1v9h-1zM513 221h1v7h-1zM514 223h1v4h-1zM515 223h1v4h-1zM516 219h1v10h-1zM517 219h1v10h-1zM518 221h1v6h-1zM519 220h1v9h-1zM520 220h1v9h-1zM521 219h1v10h-1zM522 219h1v10h-1zM523 221h1v7h-1zM524 222h1v5h-1zM525 221h1v7h-1zM526 219h1v8h-1zM527 219h1v8h-1zM528 221h1v8h-1zM529 222h1v7h-1zM530 221h1v6h-1zM531 221h1v6h-1zM532 221h1v6h-1zM533 219h1v9h-1zM534 221h1v7h-1zM535 221h1v6h-1zM536 221h1v6h-1zM537 221h1v6h-1zM538 222h1v5h-1zM539 221h1v6h-1zM540 219h1v8h-1zM541 220h1v8h-1zM542 220h1v8h-1zM543 220h1v8h-1zM544 221h1v8h-1zM545 221h1v8h-1zM546 221h1v8h-1zM547 221h1v7h-1zM548 221h1v7h-1zM549 221h1v8h-1zM550 222h1v7h-1zM551 223h1v4h-1zM552 223h1v4h-1zM553 220h1v7h-1zM554 223h1v6h-1zM555 223h1v6h-1zM556 222h1v7h-1zM557 221h1v6h-1zM558 221h1v6h-1zM559 221h1v6h-1zM560 221h1v6h-1zM561 223h1v6h-1zM562 223h1v6h-1zM563 219h1v10h-1zM564 222h1v7h-1zM565 222h1v7h-1zM566 219h1v10h-1zM567 223h1v5h-1zM568 223h1v5h-1zM569 219h1v10h-1zM570 222h1v5h-1zM571 220h1v8h-1zM572 222h1v5h-1zM573 219h1v8h-1zM574 219h1v8h-1zM575 219h1v9h-1zM576 219h1v9h-1zM577 219h1v9h-1zM578 219h1v9h-1zM579 222h1v5h-1zM580 222h1v5h-1zM581 221h1v6h-1zM582 221h1v6h-1zM583 219h1v9h-1zM584 219h1v9h-1zM585 219h1v9h-1zM586 223h1v4h-1zM587 221h1v7h-1zM588 221h1v7h-1zM589 221h1v7h-1zM590 223h1v6h-1zM591 223h1v5h-1zM592 221h1v7h-1zM593 222h1v6h-1zM594 219h1v8h-1zM595 223h1v6h-1zM596 219h1v9h-1zM597 221h1v7h-1zM598 220h1v8h-1zM599 220h1v9h-1zM600 220h1v9h-1zM601 220h1v9h-1zM602 220h1v9h-1zM603 219h1v9h-1zM604 221h1v7h-1zM605 221h1v7h-1zM606 128h1v101h-1zM607 128h1v7h-1zM608 128h1v5h-1zM609 128h1v5h-1zM610 128h1v5h-1zM611 128h1v5h-1zM612 128h1v5h-1zM613 127h1v9h-1zM614 127h1v9h-1zM615 127h1v9h-1zM616 128h1v7h-1zM617 128h1v5h-1zM618 128h1v5h-1zM619 128h1v7h-1zM620 128h1v7h-1zM621 128h1v5h-1zM622 128h1v5h-1zM623 128h1v5h-1zM624 128h1v5h-1zM625 129h1v5h-1zM626 129h1v5h-1zM627 129h1v5h-1zM628 130h1v4h-1zM629 130h1v4h-1zM630 129h1v5h-1zM631 131h1v3h-1zM632 131h1v3h-1zM633 129h1v5h-1zM634 129h1v5h-1zM635 129h1v5h-1zM636 129h1v8h-1zM637 129h1v8h-1zM638 131h1v5h-1zM639 129h1v7h-1zM640 129h1v7h-1zM641 129h1v5h-1zM642 129h1v5h-1zM643 129h1v5h-1zM644 131h1v3h-1zM645 131h1v3h-1zM646 131h1v3h-1zM647 129h1v7h-1zM648 130h1v6h-1zM649 130h1v6h-1zM650 130h1v6h-1zM651 130h1v6h-1zM652 129h1v7h-1zM653 129h1v7h-1zM654 129h1v7h-1zM655 129h1v7h-1z" fill="#00ffff"/>
</g>
<!-- trigger level marker -->
<polygon points="643,163 643,166 656,172.5 656,157" fill="#ffff00"/>
<!-- ch4 marker -->
<polygon points="0,245 9,245 15,239 15,242 9,248 0,248" fill="#ff0000"/>
<polygon points="0,232 9,232 15,238 15,240 9,246 0,246" fill="#00ff00"/>
<text x="1.2" y="244" font-family="Liberation Sans, sans-serif" font-size="14" font-weight="bold" fill="#3a3aff" stroke="#3a3aff" stroke-width="0.3">4</text>
<!-- time label -->
<polygon points="300.5,28.5 369.5,28.5 369.5,41.5 366.5,44.5 341,44.5 335.5,51.5 330,44.5 303.5,44.5 300.5,41.5" fill="#3366ff" stroke="#90c8ff" stroke-width="1"/>
<rect x="301" y="29" width="68" height="1" fill="#b8e0ff"/>
<text x="312.5" y="43" font-family="Liberation Sans, sans-serif" font-size="16" fill="#fff" stroke="#3366ff" stroke-width="0.4" textLength="46" lengthAdjust="spacingAndGlyphs">0.000s</text>

<!-- top bar -->
<g fill="#ffff00" shape-rendering="crispEdges">
<rect x="17" y="7" width="3" height="14"/><rect x="25" y="7" width="3" height="14"/><rect x="20" y="11" width="5" height="4"/>
<rect x="31" y="10" width="12" height="1"/><rect x="31" y="11" width="4" height="2"/><rect x="40" y="11" width="3" height="10"/><rect x="31" y="14" width="9" height="3"/><rect x="31" y="17" width="4" height="3"/><rect x="31" y="20" width="12" height="1"/><rect x="43" y="18" width="3" height="3"/>
<rect x="46" y="10" width="10" height="3"/><rect x="46" y="13" width="3" height="8"/><rect x="53" y="11" width="4" height="10"/>
<rect x="60" y="7" width="3" height="14"/><rect x="63" y="10" width="4" height="3"/><rect x="63" y="18" width="4" height="3"/>
<rect x="69" y="10" width="12" height="3"/><rect x="69" y="13" width="3" height="8"/><rect x="78" y="13" width="3" height="1"/><rect x="72" y="14" width="9" height="3"/><rect x="72" y="18" width="12" height="3"/>
<rect x="84" y="7" width="3" height="14"/>
</g>
<polygon points="87,13 91,9.5 94.5,9.5 89.5,15.5 94.5,21 91,21 87,17.5" fill="#ffff00"/>
<g>
<rect x="115.5" y="3.5" width="22" height="20" fill="#000" stroke="#a8a8a8" stroke-width="1.2"/>
<polyline points="116.5,9.00 117.0,8.20 117.5,7.47 118.0,6.90 118.5,6.53 119.0,6.40 119.5,6.53 120.0,6.90 120.5,7.47 121.0,8.20 121.5,9.00 122.0,9.80 122.5,10.53 123.0,11.10 123.5,11.47 124.0,11.60 124.5,11.47 125.0,11.10 125.5,10.53 126.0,9.80 126.5,9.00 127.0,8.20 127.5,7.47 128.0,6.90 128.5,6.53 129.0,6.40 129.5,6.53 130.0,6.90 130.5,7.47 131.0,8.20 131.5,9.00 132.0,9.80 132.5,10.53 133.0,11.10 133.5,11.47 134.0,11.60 134.5,11.47 135.0,11.10 135.5,10.53 136.0,9.80 136.5,9.00 137.0,8.20" fill="none" stroke="#ffff00" stroke-width="2.8"/>
<polyline points="116.5,17.80 117.0,17.00 117.5,16.27 118.0,15.70 118.5,15.33 119.0,15.20 119.5,15.33 120.0,15.70 120.5,16.27 121.0,17.00 121.5,17.80 122.0,18.60 122.5,19.33 123.0,19.90 123.5,20.27 124.0,20.40 124.5,20.27 125.0,19.90 125.5,19.33 126.0,18.60 126.5,17.80 127.0,17.00 127.5,16.27 128.0,15.70 128.5,15.33 129.0,15.20 129.5,15.33 130.0,15.70 130.5,16.27 131.0,17.00 131.5,17.80 132.0,18.60 132.5,19.33 133.0,19.90 133.5,20.27 134.0,20.40 134.5,20.27 135.0,19.90 135.5,19.33 136.0,18.60 136.5,17.80 137.0,17.00" fill="none" stroke="#00ffff" stroke-width="2.8"/>
<rect x="140.5" y="3.5" width="22" height="20" fill="#000" stroke="#a8a8a8" stroke-width="1.2"/>
<line x1="144.5" y1="20" x2="158.5" y2="6" stroke="#00ff00" stroke-width="3" stroke-linecap="round"/>
<rect x="165.5" y="3.5" width="22" height="20" fill="#000" stroke="#a8a8a8" stroke-width="1.2"/>
<defs><filter id="bl" x="-20%" y="-20%" width="140%" height="140%"><feGaussianBlur stdDeviation="0.7"/></filter></defs>
<g filter="url(#bl)">
<path d="M168.5,13.5 h4 v-8 l1.5,-1 h8.5 l1.5,1.5 v4 l1.5,1.5 v2.5 l-1.5,1 h-3.5 v7.5 l-1,1 h-10 l-1,-1.5 z" fill="#8c8c8c"/>
<rect x="175" y="6" width="2" height="9" fill="#b0b0b0"/>
<rect x="179" y="5.5" width="2" height="7" fill="#a4a4a4"/>
<rect x="171" y="14.5" width="2" height="7" fill="#aaaaaa"/>
<rect x="174.5" y="15.5" width="1.5" height="6" fill="#a0a0a0"/>
<rect x="169.5" y="21" width="9" height="1.5" fill="#6a6a6a"/>
</g>
</g>
<path d="M192.5,23.5 L190.5,21.5 V4.5 L192.5,2.5 H233" fill="none" stroke="#383038" stroke-width="1"/>
<!-- pulse icon -->
<path d="M241.5,21.5 h4 V6 h10 V21 h6.5" fill="none" stroke="#e0ffff" stroke-width="2"/>
<path d="M247.5,3v3M249.5,3v3M251.5,3v3M253.5,3v3M257.5,18v6M259.5,18v6M261.5,19v4M243.5,17v7M241.5,20v3" stroke="#e0ffff" stroke-width="1"/>
<path d="M248.5,7v2M252.5,7v2M256.5,19v2" stroke="#c0e8e8" stroke-width="1"/>
<!-- T -->
<rect x="268" y="4" width="14" height="4" fill="#00ff00"/>
<rect x="273" y="8" width="4" height="14" fill="#00ff00"/>
<!-- key -->
<g fill="#3e403c">
<polygon points="290,14 292,12 307,12 307,16 290,16"/>
<rect x="293" y="16" width="2.5" height="3"/><rect x="297" y="16" width="2" height="3.5"/><rect x="301" y="16" width="2" height="2.5"/>
<polygon points="306,10.5 307.5,9 311.5,9 313,10.5 313,19.5 311.5,21 307.5,21 306,19.5"/>
</g>
<rect x="308.5" y="12" width="2" height="5" fill="#545652"/>
<!-- floppy -->
<path d="M315.5,3.5 h20 v19 h-17 l-3,-3 z" fill="none" stroke="#b8f0f0" stroke-width="1"/>
<rect x="315" y="4" width="1" height="15" fill="#7060e0"/>
<path d="M316.5,4.5 h18 v17 h-15.5 l-2.5,-2.5 z" fill="none" stroke="#6050d0" stroke-width="1"/>
<path d="M319.5,4 v8.5 h13 v-8.5" fill="none" stroke="#c0ffff" stroke-width="1"/>
<rect x="320" y="4" width="2" height="8" fill="#2020a0"/>
<rect x="321" y="15" width="10" height="7" fill="#c0ffff"/>
<rect x="322" y="16" width="3" height="6" fill="#545652"/>
<rect x="323" y="17" width="1" height="4" fill="#2020a0"/>
<!-- printer -->
<g fill="none" stroke="#43453f" stroke-width="2">
<rect x="346" y="4" width="11" height="9"/>
<rect x="342" y="14" width="19" height="9" rx="1"/>
</g>
<g fill="#43453f"><rect x="348" y="6" width="7" height="1"/><rect x="348" y="8" width="7" height="2"/><rect x="348" y="11" width="7" height="1"/><rect x="344" y="17" width="15" height="3"/></g>
<rect x="366" y="1" width="1" height="26" fill="#000"/>
<rect x="367" y="1" width="1" height="26" fill="#8a8a8a"/>
<!-- overview -->
<rect x="394" y="4" width="112" height="20" fill="#000" stroke="#8a88b8" stroke-width="2"/>
<path d="M396,16 h1.5 V7 V21 V13 h2 V7 V21 V13 h2 V7 V21 V15 h1" fill="none" stroke="#0c6262" stroke-width="1"/>
<path d="M497,16 h0.5 V7 V21 V13 h2.5 V7 V21 V13 h2.5 V7 V21 V15 h1" fill="none" stroke="#0c6262" stroke-width="1"/>
<rect x="405.25" y="4.25" width="88.5" height="18.5" fill="#000" stroke="#ff6000" stroke-width="2.5"/>
<polyline points="407.0,17.1 407.5,19.5 408.0,20.8 408.5,20.8 409.0,19.4 409.5,16.9 410.0,13.8 410.5,10.7 411.0,8.4 411.5,7.1 412.0,7.3 412.5,8.8 413.0,11.3 413.5,14.4 414.0,17.4 414.5,19.8 415.0,20.9 415.5,20.7 416.0,19.1 416.5,16.5 417.0,13.4 417.5,10.4 418.0,8.1 418.5,7.1 419.0,7.4 419.5,9.0 420.0,11.7 420.5,14.8 421.0,17.8 421.5,20.0 422.0,21.0 422.5,20.6 423.0,18.8 423.5,16.2 424.0,13.0 424.5,10.1 425.0,7.9 425.5,7.0 426.0,7.5 426.5,9.3 427.0,12.0 427.5,15.2 428.0,18.1 428.5,20.1 429.0,21.0 429.5,20.4 430.0,18.6 430.5,15.8 431.0,12.6 431.5,9.8 432.0,7.8 432.5,7.0 433.0,7.7 433.5,9.6 434.0,12.4 434.5,15.5 435.0,18.4 435.5,20.3 436.0,21.0 436.5,20.3 437.0,18.3 437.5,15.4 438.0,12.3 438.5,9.5 439.0,7.6 439.5,7.0 440.0,7.8 440.5,9.9 441.0,12.8 441.5,15.9 442.0,18.7 442.5,20.5 443.0,21.0 443.5,20.1 444.0,18.0 444.5,15.0 445.0,11.9 445.5,9.2 446.0,7.5 446.5,7.0 447.0,8.0 447.5,10.2 448.0,13.1 448.5,16.3 449.0,18.9 449.5,20.6 450.0,21.0 450.5,19.9 451.0,17.6 451.5,14.7 452.0,11.5 452.5,8.9 453.0,7.3 453.5,7.1 454.0,8.2 454.5,10.5 455.0,13.5 455.5,16.6 456.0,19.2 456.5,20.7 457.0,20.9 457.5,19.7 458.0,17.3 458.5,14.3 459.0,11.2 459.5,8.7 460.0,7.2 460.5,7.1 461.0,8.4 461.5,10.9 462.0,13.9 462.5,17.0 463.0,19.4 463.5,20.8 464.0,20.8 464.5,19.4 465.0,17.0 465.5,13.9 466.0,10.9 466.5,8.4 467.0,7.1 467.5,7.2 468.0,8.7 468.5,11.2 469.0,14.3 469.5,17.3 470.0,19.7 470.5,20.9 471.0,20.7 471.5,19.2 472.0,16.6 472.5,13.5 473.0,10.5 473.5,8.2 474.0,7.1 474.5,7.3 475.0,8.9 475.5,11.5 476.0,14.7 476.5,17.6 477.0,19.9 477.5,21.0 478.0,20.6 478.5,18.9 479.0,16.3 479.5,13.1 480.0,10.2 480.5,8.0 481.0,7.0 481.5,7.5 482.0,9.2 482.5,11.9 483.0,15.0 483.5,18.0 484.0,20.1 484.5,21.0 485.0,20.5 485.5,18.7 486.0,15.9 486.5,12.8 487.0,9.9 487.5,7.8 488.0,7.0 488.5,7.6 489.0,9.5 489.5,12.3 490.0,15.4 490.5,18.3 491.0,20.3 491.5,21.0 492.0,20.3 492.5,18.4 493.0,15.5" fill="none" stroke="#00ffff" stroke-width="2"/>
<!-- W -->
<rect x="521.5" y="3.5" width="21" height="21" fill="#000" stroke="#b0b0b0" stroke-width="1"/>
<text x="522.5" y="21" font-family="Liberation Sans, sans-serif" font-size="19" font-weight="bold" fill="#d8ffff" stroke="#000" stroke-width="0.6" transform="translate(522.5 0) scale(1.08 1) translate(-522.5 0)">W</text>
<!-- timebase pill -->
<rect x="547.5" y="3.5" width="98.5" height="20.5" rx="9" fill="#000" stroke="#2a2630" stroke-width="0.8"/>
<text x="569" y="21" font-family="Liberation Sans, sans-serif" font-size="18" fill="#fff" stroke="#000" stroke-width="0.35" letter-spacing="0.3">20.0us</text>

<!-- bottom bar -->
<g font-family="Liberation Sans, sans-serif" font-size="16">
<text x="15" y="470" fill="#ffff00" stroke="#545652" stroke-width="0.45">CH1</text>
<rect x="48" y="453" width="62" height="22" rx="11" fill="#000"/>
<text x="58" y="472" fill="#ffff00" stroke="#000" stroke-width="0.45">1.00V</text>
<text x="115" y="470" fill="#00ffff" stroke="#545652" stroke-width="0.45">CH2</text>
<rect x="148" y="453" width="62" height="22" rx="11" fill="#000"/>
<text x="158" y="472" fill="#00ffff" stroke="#000" stroke-width="0.45">1.00V</text>
<text x="215" y="470" fill="#ff0000" stroke="#545652" stroke-width="0.45">CH3</text>
<rect x="248" y="453" width="62" height="22" rx="11" fill="#000"/>
<text x="258" y="472" fill="#ff0000" stroke="#000" stroke-width="0.45">1.00V</text>
<text x="315" y="470" fill="#00ff00" stroke="#545652" stroke-width="0.45">CH4</text>
<rect x="348" y="453" width="62" height="22" rx="11" fill="#000"/>
<text x="358" y="472" fill="#00ff00" stroke="#000" stroke-width="0.45">1.00V</text>
<text x="418" y="470" fill="#ffff00" stroke="#545652" stroke-width="0.45">CH1</text>
<path d="M453,473 h6 l5,-16 h6" fill="none" stroke="#a0d8ff" stroke-width="2"/>
<rect x="473" y="453" width="70" height="22" rx="11" fill="#000"/>
<text x="488" y="470" fill="#ffff00" stroke="#000" stroke-width="0.45">1.48V</text>
<rect x="550" y="453" width="100" height="22" rx="11" fill="#000"/>
<text x="562" y="470" fill="#ffff00" stroke="#000" stroke-width="0.45">10.0000Hz</text>
</g>

<!-- right panel -->
<rect x="656" y="0" width="144" height="480" fill="#c0b8c0"/>
<rect x="657" y="1" width="143" height="27" fill="#40443e"/>
<rect x="657" y="28" width="143" height="452" fill="#787878"/>
<text x="678.4" y="20.6" font-family="Liberation Sans, sans-serif" font-size="21.3" fill="#fff">UTILITY</text>
<rect x="777" y="3" width="21" height="21" fill="#ff3300"/>
<path d="M781.5,6.5 L793.5,19.5 M793.5,6.5 L781.5,19.5" stroke="#fff" stroke-width="2.6"/>
<path d="M676.5,105.5 L673.5,102.5 V67.5 L676.5,64.5 H779.5" fill="none" stroke="#c4bcc4" stroke-width="1"/><path d="M779.5,64.5 L782.5,67.5 V102.5 L779.5,105.5 H676.5" fill="none" stroke="#262626" stroke-width="1"/><text x="728.4" y="84" font-family="Liberation Sans, sans-serif" font-size="17.5" fill="#fff" stroke="#787878" stroke-width="0.4" text-anchor="middle" letter-spacing="0.35">System</text><text x="728.4" y="102" font-family="Liberation Sans, sans-serif" font-size="17.5" fill="#fff" stroke="#787878" stroke-width="0.4" text-anchor="middle" letter-spacing="0.7">Status</text><path d="M676.5,186.5 L673.5,183.5 V148.5 L676.5,145.5 H779.5" fill="none" stroke="#c4bcc4" stroke-width="1"/><path d="M779.5,145.5 L782.5,148.5 V183.5 L779.5,186.5 H676.5" fill="none" stroke="#262626" stroke-width="1"/><text x="728" y="165" font-family="Liberation Sans, sans-serif" font-size="17.5" fill="#fff" stroke="#787878" stroke-width="0.4" text-anchor="middle" >Update</text><text x="728" y="183" font-family="Liberation Sans, sans-serif" font-size="17.5" fill="#fff" stroke="#787878" stroke-width="0.4" text-anchor="middle" >Firmware</text><path d="M676.5,262.5 L673.5,259.5 V224.5 L676.5,221.5 H779.5" fill="none" stroke="#c4bcc4" stroke-width="1"/><path d="M779.5,221.5 L782.5,224.5 V259.5 L779.5,262.5 H676.5" fill="none" stroke="#262626" stroke-width="1"/><text x="728" y="241" font-family="Liberation Sans, sans-serif" font-size="17.5" fill="#fff" stroke="#787878" stroke-width="0.4" text-anchor="middle" >Save</text><text x="728" y="259" font-family="Liberation Sans, sans-serif" font-size="17.5" fill="#fff" stroke="#787878" stroke-width="0.4" text-anchor="middle" >Waveform</text><path d="M676.5,346.5 L673.5,343.5 V308.5 L676.5,305.5 H779.5" fill="none" stroke="#c4bcc4" stroke-width="1"/><path d="M779.5,305.5 L782.5,308.5 V343.5 L779.5,346.5 H676.5" fill="none" stroke="#262626" stroke-width="1"/><text x="727" y="333" font-family="Liberation Sans, sans-serif" font-size="17.5" fill="#fff" stroke="#787878" stroke-width="0.4" text-anchor="middle" word-spacing="2">Do Self Cal</text><path d="M681.5,472.5 L678.5,469.5 V451.5 L681.5,448.5 H774.5" fill="none" stroke="#c4bcc4" stroke-width="1"/><path d="M774.5,448.5 L777.5,451.5 V469.5 L774.5,472.5 H681.5" fill="none" stroke="#262626" stroke-width="1"/><text x="692" y="467" font-family="Liberation Sans, sans-serif" font-size="17.5" fill="#fff" stroke="#787878" stroke-width="0.4" textLength="37" lengthAdjust="spacingAndGlyphs">Page</text><text x="735" y="467" font-family="Liberation Sans, sans-serif" font-size="17.5" fill="#fff" stroke="#787878" stroke-width="0.4" letter-spacing="2.6">1/4</text></svg>
</body></html>
